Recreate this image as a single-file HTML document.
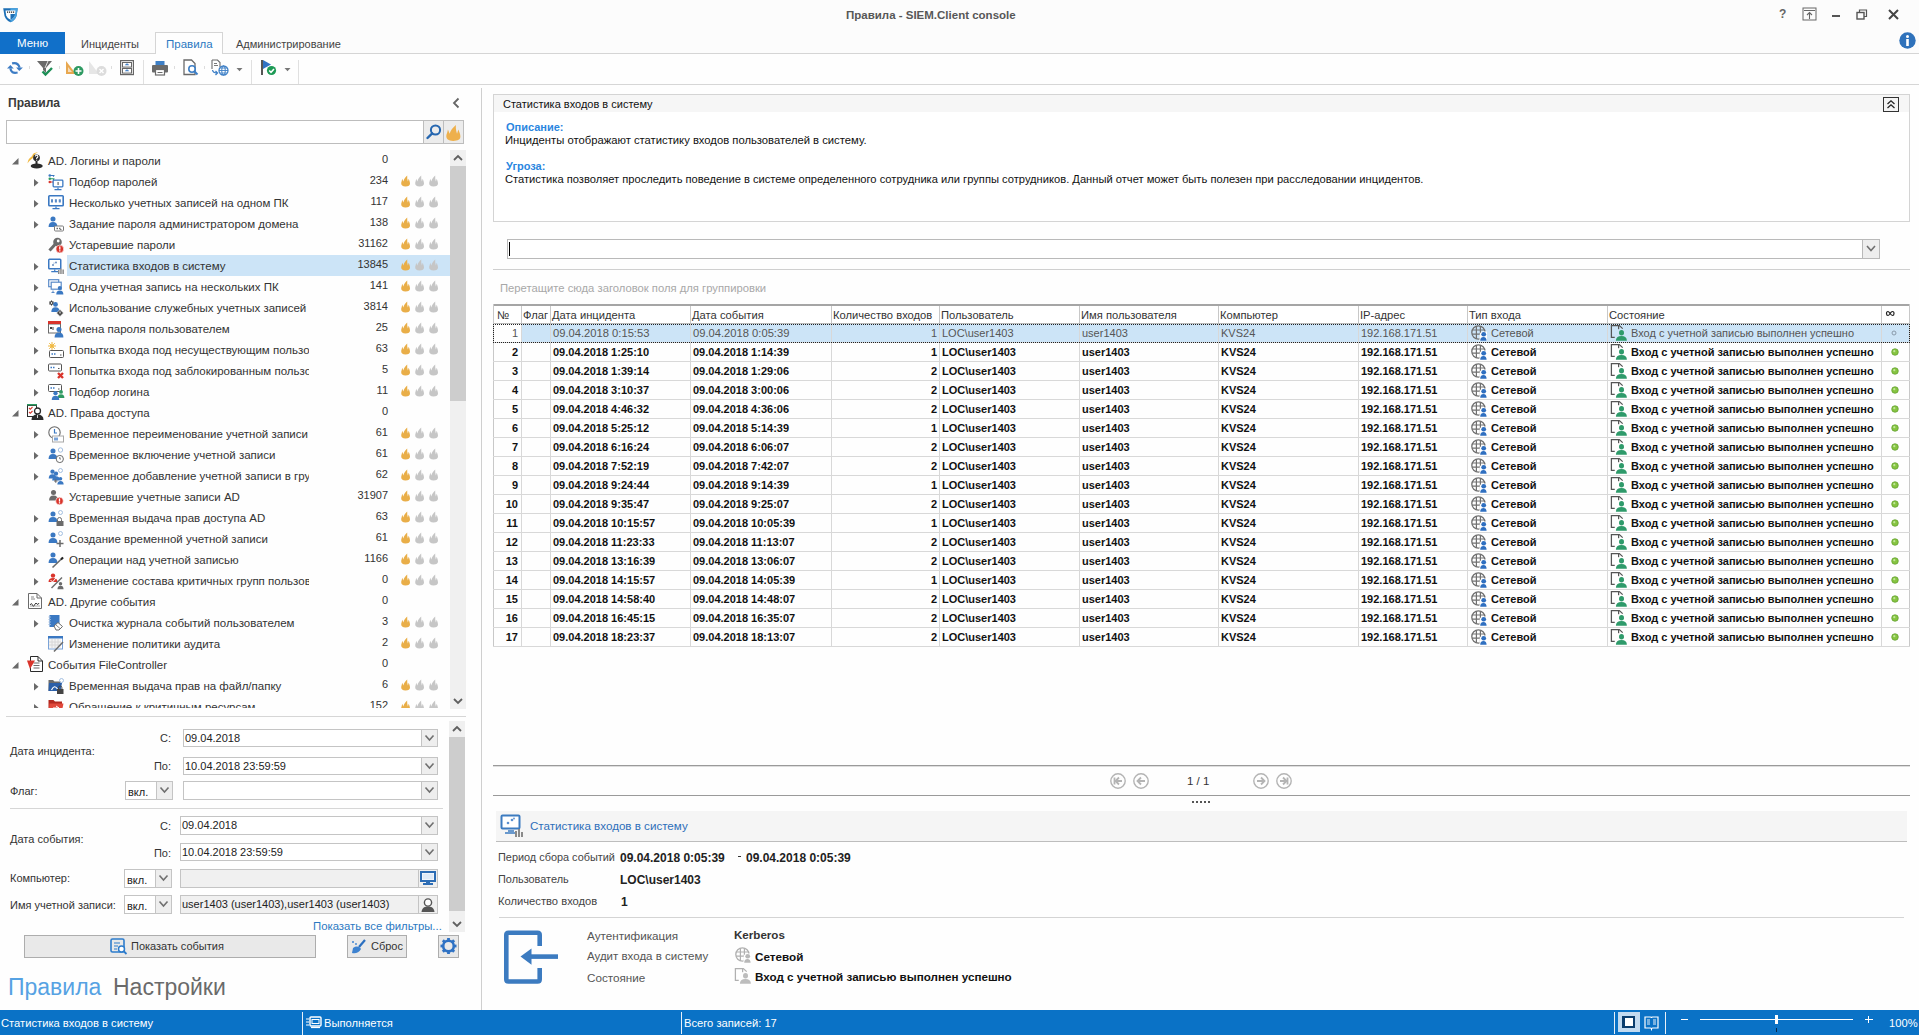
<!DOCTYPE html><html><head><meta charset="utf-8"><style>
html,body{margin:0;padding:0;}
body{width:1919px;height:1035px;position:relative;overflow:hidden;background:#fefefe;font-family:'Liberation Sans', sans-serif;}
div{box-sizing:border-box;}
</style></head><body><div style="position:absolute;left:0px;top:0px;width:1919px;height:32px;background:#fcfcfc"></div><div style="position:absolute;top:10px;font-size:11.5px;line-height:1;white-space:nowrap;color:#575757;font-weight:bold;left:846px;">Правила - SIEM.Client console</div><div style="position:absolute;left:0px;top:32px;width:1919px;height:22px;background:#fcfcfc"></div><div style="position:absolute;left:0px;top:53px;width:1919px;height:1px;background:#d5d5d5"></div><div style="position:absolute;left:0px;top:32px;width:65px;height:22px;background:#1170c9"></div><div style="position:absolute;top:38px;font-size:11.5px;line-height:1;white-space:nowrap;color:#ffffff;font-weight:normal;left:17px;">Меню</div><div style="position:absolute;top:39px;font-size:11px;line-height:1;white-space:nowrap;color:#444;font-weight:normal;left:81px;">Инциденты</div><div style="position:absolute;left:155px;top:32px;width:68px;height:22px;background:#fefefe;border:1px solid #d5d5d5;border-bottom:none"></div><div style="position:absolute;top:39px;font-size:11.5px;line-height:1;white-space:nowrap;color:#2b79c2;font-weight:normal;left:166px;">Правила</div><div style="position:absolute;top:39px;font-size:11px;line-height:1;white-space:nowrap;color:#444;font-weight:normal;left:236px;">Администрирование</div><div style="position:absolute;left:0px;top:54px;width:1919px;height:30px;background:#fefefe"></div><div style="position:absolute;left:0px;top:84px;width:1919px;height:1px;background:#d6d6d6"></div><svg style="position:absolute;left:2px;top:7px;" width="17" height="16" viewBox="0 0 17 16"><path d="M1.2 1.2 H15.8 L14.5 9 Q13 13.5 8.5 15.2 Q4 13.5 2.5 9 Z" fill="#1d6fb5"/><path d="M8.5 1.2 H15.8 L14.5 9 Q13 13.5 8.5 15.2 Z" fill="#4aa3e0"/><path d="M3.5 3.5 H13.5 L12.8 8.5 Q11.8 11.5 8.5 12.8 Q5.2 11.5 4.2 8.5 Z" fill="#fff"/><path d="M8.5 7 H13 L12.8 8.5 Q11.8 11.5 8.5 12.8 Z" fill="#1d6fb5"/><path d="M5 5.2 h1.2 M7 5.2 h1.2 M9 5.2 h1.2 M11 5.2 h1.2" stroke="#222" stroke-width="1.2"/></svg><div style="position:absolute;top:8px;font-size:12px;line-height:1;white-space:nowrap;color:#666;font-weight:bold;left:1779px;">?</div><svg style="position:absolute;left:1802px;top:7px;" width="15" height="14" viewBox="0 0 15 14"><rect x="1" y="1" width="13" height="12" fill="none" stroke="#666" stroke-width="1"/><path d="M2 3.5 H13" stroke="#666" stroke-width="1"/><path d="M7.5 12 V5.5 M5 8 L7.5 5.5 L10 8" stroke="#666" stroke-width="1.1" fill="none"/></svg><div style="position:absolute;left:1832px;top:15px;width:8px;height:2px;background:#555"></div><svg style="position:absolute;left:1856px;top:9px;" width="12" height="11" viewBox="0 0 12 11"><rect x="1" y="3.5" width="7" height="6.5" fill="none" stroke="#555" stroke-width="1.4"/><path d="M3.5 3.5 V1 H10.5 V7.5 H8" stroke="#555" stroke-width="1.2" fill="none"/></svg><svg style="position:absolute;left:1888px;top:9px;" width="11" height="11" viewBox="0 0 11 11"><path d="M1 1 L10 10 M10 1 L1 10" stroke="#444" stroke-width="2"/></svg><svg style="position:absolute;left:1899px;top:32px;" width="17" height="17" viewBox="0 0 17 17"><circle cx="8.5" cy="8.5" r="8.2" fill="#2f72bb"/><circle cx="8.5" cy="4.5" r="1.5" fill="#fff"/><rect x="7.2" y="7" width="2.6" height="7" fill="#fff"/></svg><svg style="position:absolute;left:6px;top:60px;" width="18" height="16" viewBox="0 0 18 16"><path d="M6.1 3.4 Q12 2 13.6 7.6" stroke="#3d7cc4" stroke-width="2.2" fill="none"/><path d="M10.1 7.4 H16.9 L13.3 11 Z" fill="#3d7cc4"/><path d="M11.6 12.5 Q5 14 4.4 8.4" stroke="#3d7cc4" stroke-width="2.2" fill="none"/><path d="M1 8.5 H7.8 L4.4 4.9 Z" fill="#3d7cc4"/></svg><div style="position:absolute;left:29px;top:66px;width:1px;height:3px;background:#ddd"></div><svg style="position:absolute;left:36px;top:60px;" width="18" height="17" viewBox="0 0 18 17"><path d="M1 1 H16 L10 8 V13 L7 10 V8 Z" fill="#6a6a6a"/><path d="M12 1 L9 8" stroke="#fff" stroke-width="0.8"/><path d="M6.5 11.5 L9.5 14.5 L16 8" stroke="#1d8f56" stroke-width="2.4" fill="none"/></svg><div style="position:absolute;left:59px;top:66px;width:1px;height:3px;background:#ddd"></div><svg style="position:absolute;left:65px;top:60px;" width="19" height="17" viewBox="0 0 19 17"><path d="M1 1 L11 14 H1 Z" fill="#e8a850"/><path d="M3 7 V12 H7 Z" fill="#fff" opacity="0.6"/><circle cx="13.5" cy="11" r="5" fill="#2e9a62"/><path d="M13.5 8 V14 M10.5 11 H16.5" stroke="#fff" stroke-width="1.6"/></svg><svg style="position:absolute;left:88px;top:60px;" width="19" height="17" viewBox="0 0 19 17"><path d="M1 1 L11 14 H1 Z" fill="#e6e6e6"/><circle cx="13.5" cy="11" r="5" fill="#dcdcdc"/><path d="M11.5 9 L15.5 13 M15.5 9 L11.5 13" stroke="#fff" stroke-width="1.4"/></svg><div style="position:absolute;left:111px;top:66px;width:1px;height:3px;background:#ddd"></div><svg style="position:absolute;left:119px;top:59px;" width="16" height="17" viewBox="0 0 16 17"><rect x="1.6" y="1.6" width="12.8" height="14" fill="none" stroke="#666" stroke-width="1.2"/><rect x="3.5" y="3.5" width="9" height="4.6" fill="none" stroke="#666" stroke-width="1"/><rect x="3.5" y="9.5" width="9" height="4.6" fill="none" stroke="#666" stroke-width="1"/><path d="M6.5 5.8 Q8 3.8 9.5 5.8 Z M6.5 11.8 Q8 9.8 9.5 11.8 Z" fill="#3d7cc4" stroke="#3d7cc4" stroke-width="0.8"/></svg><div style="position:absolute;left:143px;top:60px;width:1px;height:24px;background:#e0e0e0"></div><svg style="position:absolute;left:151px;top:60px;" width="18" height="16" viewBox="0 0 18 16"><rect x="4.5" y="1" width="9" height="4" fill="#3d7fc6"/><rect x="1" y="5" width="16" height="7.5" rx="1" fill="#6a6a6a"/><rect x="4.5" y="9.5" width="9" height="5.5" fill="#fff" stroke="#6a6a6a" stroke-width="1.2"/><path d="M6.5 12.5 H11.5" stroke="#6a6a6a" stroke-width="1"/></svg><div style="position:absolute;left:174px;top:66px;width:1px;height:3px;background:#ddd"></div><svg style="position:absolute;left:183px;top:59px;" width="17" height="17" viewBox="0 0 17 17"><path d="M1 1 H8.5 L12 4.5 V15.5 H1 Z" fill="#fff" stroke="#6a6a6a" stroke-width="1.3"/><circle cx="9" cy="10" r="3.2" fill="#fff" stroke="#3d7fc6" stroke-width="1.6"/><path d="M11.3 12.3 L14.5 15.5" stroke="#3d7fc6" stroke-width="2"/></svg><div style="position:absolute;left:204px;top:66px;width:1px;height:3px;background:#ddd"></div><svg style="position:absolute;left:211px;top:59px;" width="18" height="17" viewBox="0 0 18 17"><path d="M1 1 H6.5 L9 3.5 V8" fill="none" stroke="#6a6a6a" stroke-width="1.1"/><path d="M1 1 V10" stroke="#6a6a6a" stroke-width="1.1"/><path d="M3 4.5 H6 M3 6.5 H7" stroke="#6a6a6a" stroke-width="0.9"/><path d="M1.5 11 Q2 14 6 14 M4.5 12 L6.5 14 L4.5 16" stroke="#3d7fc6" stroke-width="1.3" fill="none"/><circle cx="12.5" cy="11.5" r="4.5" fill="#fff" stroke="#3d7fc6" stroke-width="1.3"/><ellipse cx="12.5" cy="11.5" rx="1.8" ry="4.5" fill="none" stroke="#3d7fc6" stroke-width="1"/><path d="M8 11.5 H17 M9 9 H16 M9 14 H16" stroke="#3d7fc6" stroke-width="0.9"/></svg><svg style="position:absolute;left:236px;top:68px;" width="7" height="4" viewBox="0 0 7 4"><path d="M0.5 0 H6.5 L3.5 3.2 Z" fill="#777"/></svg><div style="position:absolute;left:251px;top:60px;width:1px;height:24px;background:#e0e0e0"></div><svg style="position:absolute;left:260px;top:59px;" width="18" height="17" viewBox="0 0 18 17"><rect x="1" y="1" width="2" height="15" fill="#555"/><path d="M3 1 L11 5.5 L3 10 Z" fill="#2f72c4"/><circle cx="11.5" cy="11.5" r="4.6" fill="#1d9a55"/><path d="M9.2 11.5 L11 13.3 L14 10" stroke="#fff" stroke-width="1.5" fill="none"/></svg><svg style="position:absolute;left:284px;top:68px;" width="7" height="4" viewBox="0 0 7 4"><path d="M0.5 0 H6.5 L3.5 3.2 Z" fill="#777"/></svg><div style="position:absolute;left:298px;top:60px;width:1px;height:24px;background:#e0e0e0"></div><div style="position:absolute;top:97px;font-size:12.1px;line-height:1;white-space:nowrap;color:#3a3a3a;font-weight:bold;left:8px;">Правила</div><div style="position:absolute;left:481px;top:88px;width:1px;height:922px;background:#cfcfcf"></div><svg style="position:absolute;left:451px;top:97px;" width="10" height="12" viewBox="0 0 10 12"><path d="M7.5 1.5 L3 6 L7.5 10.5" stroke="#666" stroke-width="1.8" fill="none"/></svg><div style="position:absolute;left:6px;top:120px;width:438px;height:24px;background:#fff;border:1px solid #bdbdbd"></div><div style="position:absolute;left:423px;top:120px;width:21px;height:24px;background:#ececec;border:1px solid #bdbdbd"></div><div style="position:absolute;left:443px;top:120px;width:21px;height:24px;background:#ececec;border:1px solid #bdbdbd"></div><svg style="position:absolute;left:425px;top:123px;" width="18" height="18" viewBox="0 0 18 18"><circle cx="10.5" cy="7" r="4.6" stroke="#2667b0" stroke-width="2" fill="none"/><path d="M7.2 10.3 L2.5 15" stroke="#2667b0" stroke-width="2.4" stroke-linecap="round"/></svg><svg style="position:absolute;left:445px;top:123px;" width="18" height="18" viewBox="0 0 18 18"><g transform="translate(1,1.2) scale(1.6,1.45)"><path transform="translate(0,0.5)" d="M4.5 11 C1.5 11 0 9.5 0.2 7.5 C0.3 6.5 0.8 5.5 1.2 3.2 L2.3 6 C2.8 4 4 2 6.2 0 C6 2 6.3 4 6.9 6 L7.7 3.2 C8.4 5 9 6.5 9 8 C9 10 7.5 11 4.5 11 Z" fill="#eeb04c"/></g></svg><div style="position:absolute;left:0;top:150px;width:450px;height:558px;overflow:hidden"><svg style="position:absolute;left:12px;top:8px" width="7" height="7"><path d="M6.5 0 L6.5 6.5 L0 6.5 Z" fill="#6a6a6a"/></svg><svg style="position:absolute;left:27px;top:2px" width="17" height="17" viewBox="0 0 17 17"><path d="M0.5 11.5 Q1 7 3.5 5.5 Q5.5 4 6 2 Q7.5 0 11 0.5 Q8 1 7.2 3.5 Q6.3 6.5 3.5 8 Q1.8 9 0.5 11.5 Z" fill="#f0b840"/><circle cx="9.5" cy="5.8" r="3.4" fill="#2b2b2b"/><path d="M8.3 4.6 Q8.3 3.2 9.6 3.2 Q10.9 3.2 10.9 4.5 Q10.9 5.4 9.7 6.1 V7" stroke="#fff" stroke-width="1.1" fill="none"/><rect x="9.2" y="7.7" width="1" height="1" fill="#fff"/><rect x="8.5" y="9" width="2" height="3" fill="#2b2b2b"/><ellipse cx="9.7" cy="14" rx="6" ry="2.6" fill="#2b2b2b"/></svg><div style="position:absolute;left:48px;top:6px;font-size:11.5px;line-height:1;white-space:nowrap;color:#333">AD. Логины и пароли</div><div style="position:absolute;right:62px;top:4px;font-size:11px;line-height:1;white-space:nowrap;color:#333;text-align:right">0</div><svg style="position:absolute;left:34px;top:29px" width="5" height="8"><path d="M0 0 L4.5 3.75 L0 7.5 Z" fill="#6a6a6a"/></svg><svg style="position:absolute;left:48px;top:24px" width="17" height="17" viewBox="0 0 17 17"><circle cx="1.8" cy="1.5" r="1.3" fill="#3a78c2"/><path d="M3 1.5 H6.5 M5.5 1.5 v1.2" stroke="#3a78c2" stroke-width="1.1"/><circle cx="1.8" cy="4.8" r="1.3" fill="#2e9a62"/><path d="M3 4.8 H6.5 M5.5 4.8 v1.2" stroke="#2e9a62" stroke-width="1.1"/><circle cx="1.8" cy="8" r="1.3" fill="#d9342b"/><path d="M3 8 H6.5 M5.5 8 v1.2" stroke="#d9342b" stroke-width="1.1"/><rect x="5.15" y="6.15" width="9.7" height="6.7" rx="0.8" fill="#fff" stroke="#3a78c2" stroke-width="1.3"/><path d="M10.0 13.5 v1.8 M6.5 15.7 h7" stroke="#3a78c2" stroke-width="1.2"/><rect x="9.5" y="8" width="1.2" height="3" fill="#6b6b6b"/></svg><div style="position:absolute;left:69px;top:27px;width:240px;overflow:hidden;font-size:11.5px;line-height:1;white-space:nowrap;color:#333">Подбор паролей</div><div style="position:absolute;right:62px;top:25px;font-size:11px;line-height:1;white-space:nowrap;color:#333;text-align:right">234</div><svg style="position:absolute;left:401px;top:25px" width="40" height="13"><g transform="translate(0,0)"><path transform="translate(0,0.5)" d="M4.5 11 C1.5 11 0 9.5 0.2 7.5 C0.3 6.5 0.8 5.5 1.2 3.2 L2.3 6 C2.8 4 4 2 6.2 0 C6 2 6.3 4 6.9 6 L7.7 3.2 C8.4 5 9 6.5 9 8 C9 10 7.5 11 4.5 11 Z" fill="#e9ae48"/></g><g transform="translate(14,0)"><path transform="translate(0,0.5)" d="M4.5 11 C1.5 11 0 9.5 0.2 7.5 C0.3 6.5 0.8 5.5 1.2 3.2 L2.3 6 C2.8 4 4 2 6.2 0 C6 2 6.3 4 6.9 6 L7.7 3.2 C8.4 5 9 6.5 9 8 C9 10 7.5 11 4.5 11 Z" fill="#c6c6c6"/></g><g transform="translate(28,0)"><path transform="translate(0,0.5)" d="M4.5 11 C1.5 11 0 9.5 0.2 7.5 C0.3 6.5 0.8 5.5 1.2 3.2 L2.3 6 C2.8 4 4 2 6.2 0 C6 2 6.3 4 6.9 6 L7.7 3.2 C8.4 5 9 6.5 9 8 C9 10 7.5 11 4.5 11 Z" fill="#c6c6c6"/></g></svg><svg style="position:absolute;left:34px;top:50px" width="5" height="8"><path d="M0 0 L4.5 3.75 L0 7.5 Z" fill="#6a6a6a"/></svg><svg style="position:absolute;left:48px;top:45px" width="17" height="17" viewBox="0 0 17 17"><rect x="0.8" y="0.8" width="14.4" height="9.9" rx="0.8" fill="#fff" stroke="#3a78c2" stroke-width="1.6"/><path d="M8.0 11.5 v1.8 M4.5 13.7 h7" stroke="#3a78c2" stroke-width="1.2"/><path d="M4 4.2 v3.4 M7.9 4.2 v3.4 M11.8 4.2 v3.4" stroke="#5a8bc8" stroke-width="2"/><path d="M3 5.9 h2 M6.9 5.9 h2 M10.8 5.9 h2" stroke="#5a8bc8" stroke-width="0.8"/></svg><div style="position:absolute;left:69px;top:48px;width:240px;overflow:hidden;font-size:11.5px;line-height:1;white-space:nowrap;color:#333">Несколько учетных записей на одном ПК</div><div style="position:absolute;right:62px;top:46px;font-size:11px;line-height:1;white-space:nowrap;color:#333;text-align:right">117</div><svg style="position:absolute;left:401px;top:46px" width="40" height="13"><g transform="translate(0,0)"><path transform="translate(0,0.5)" d="M4.5 11 C1.5 11 0 9.5 0.2 7.5 C0.3 6.5 0.8 5.5 1.2 3.2 L2.3 6 C2.8 4 4 2 6.2 0 C6 2 6.3 4 6.9 6 L7.7 3.2 C8.4 5 9 6.5 9 8 C9 10 7.5 11 4.5 11 Z" fill="#e9ae48"/></g><g transform="translate(14,0)"><path transform="translate(0,0.5)" d="M4.5 11 C1.5 11 0 9.5 0.2 7.5 C0.3 6.5 0.8 5.5 1.2 3.2 L2.3 6 C2.8 4 4 2 6.2 0 C6 2 6.3 4 6.9 6 L7.7 3.2 C8.4 5 9 6.5 9 8 C9 10 7.5 11 4.5 11 Z" fill="#c6c6c6"/></g><g transform="translate(28,0)"><path transform="translate(0,0.5)" d="M4.5 11 C1.5 11 0 9.5 0.2 7.5 C0.3 6.5 0.8 5.5 1.2 3.2 L2.3 6 C2.8 4 4 2 6.2 0 C6 2 6.3 4 6.9 6 L7.7 3.2 C8.4 5 9 6.5 9 8 C9 10 7.5 11 4.5 11 Z" fill="#c6c6c6"/></g></svg><svg style="position:absolute;left:34px;top:71px" width="5" height="8"><path d="M0 0 L4.5 3.75 L0 7.5 Z" fill="#6a6a6a"/></svg><svg style="position:absolute;left:48px;top:66px" width="17" height="17" viewBox="0 0 17 17"><circle cx="5" cy="3.02" r="2.52" fill="#3a78c2"/><path d="M0.5899999999999999 11.0 Q0.5899999999999999 6.065 5 6.065 Q9.41 6.065 9.41 11.0 Z" fill="#3a78c2"/><rect x="6.5" y="10.0" width="9" height="5" rx="1" fill="#fff" stroke="#7a7a7a" stroke-width="1"/><path d="M8.5 12.5 h1.5 M11 12.5 h1.5" stroke="#6b6b6b" stroke-width="1.6"/><path d="M12 13.5 h1.5" stroke="#7a7a7a" stroke-width="1"/></svg><div style="position:absolute;left:69px;top:69px;width:240px;overflow:hidden;font-size:11.5px;line-height:1;white-space:nowrap;color:#333">Задание пароля администратором домена</div><div style="position:absolute;right:62px;top:67px;font-size:11px;line-height:1;white-space:nowrap;color:#333;text-align:right">138</div><svg style="position:absolute;left:401px;top:67px" width="40" height="13"><g transform="translate(0,0)"><path transform="translate(0,0.5)" d="M4.5 11 C1.5 11 0 9.5 0.2 7.5 C0.3 6.5 0.8 5.5 1.2 3.2 L2.3 6 C2.8 4 4 2 6.2 0 C6 2 6.3 4 6.9 6 L7.7 3.2 C8.4 5 9 6.5 9 8 C9 10 7.5 11 4.5 11 Z" fill="#e9ae48"/></g><g transform="translate(14,0)"><path transform="translate(0,0.5)" d="M4.5 11 C1.5 11 0 9.5 0.2 7.5 C0.3 6.5 0.8 5.5 1.2 3.2 L2.3 6 C2.8 4 4 2 6.2 0 C6 2 6.3 4 6.9 6 L7.7 3.2 C8.4 5 9 6.5 9 8 C9 10 7.5 11 4.5 11 Z" fill="#c6c6c6"/></g><g transform="translate(28,0)"><path transform="translate(0,0.5)" d="M4.5 11 C1.5 11 0 9.5 0.2 7.5 C0.3 6.5 0.8 5.5 1.2 3.2 L2.3 6 C2.8 4 4 2 6.2 0 C6 2 6.3 4 6.9 6 L7.7 3.2 C8.4 5 9 6.5 9 8 C9 10 7.5 11 4.5 11 Z" fill="#c6c6c6"/></g></svg><svg style="position:absolute;left:48px;top:87px" width="17" height="17" viewBox="0 0 17 17"><circle cx="9.5" cy="5" r="4.3" fill="#6b6b6b"/><circle cx="10.2" cy="4" r="1.4" fill="#fff"/><path d="M7 7.5 L1.5 13.5" stroke="#6b6b6b" stroke-width="3"/><circle cx="11.8" cy="12" r="3.9" fill="#d9342b" stroke="#fff" stroke-width="0.6"/><rect x="11.15" y="9.4" width="1.3" height="3.2" fill="#fff"/><rect x="11.15" y="13.2" width="1.3" height="1.3" fill="#fff"/></svg><div style="position:absolute;left:69px;top:90px;width:240px;overflow:hidden;font-size:11.5px;line-height:1;white-space:nowrap;color:#333">Устаревшие пароли</div><div style="position:absolute;right:62px;top:88px;font-size:11px;line-height:1;white-space:nowrap;color:#333;text-align:right">31162</div><svg style="position:absolute;left:401px;top:88px" width="40" height="13"><g transform="translate(0,0)"><path transform="translate(0,0.5)" d="M4.5 11 C1.5 11 0 9.5 0.2 7.5 C0.3 6.5 0.8 5.5 1.2 3.2 L2.3 6 C2.8 4 4 2 6.2 0 C6 2 6.3 4 6.9 6 L7.7 3.2 C8.4 5 9 6.5 9 8 C9 10 7.5 11 4.5 11 Z" fill="#e9ae48"/></g><g transform="translate(14,0)"><path transform="translate(0,0.5)" d="M4.5 11 C1.5 11 0 9.5 0.2 7.5 C0.3 6.5 0.8 5.5 1.2 3.2 L2.3 6 C2.8 4 4 2 6.2 0 C6 2 6.3 4 6.9 6 L7.7 3.2 C8.4 5 9 6.5 9 8 C9 10 7.5 11 4.5 11 Z" fill="#c6c6c6"/></g><g transform="translate(28,0)"><path transform="translate(0,0.5)" d="M4.5 11 C1.5 11 0 9.5 0.2 7.5 C0.3 6.5 0.8 5.5 1.2 3.2 L2.3 6 C2.8 4 4 2 6.2 0 C6 2 6.3 4 6.9 6 L7.7 3.2 C8.4 5 9 6.5 9 8 C9 10 7.5 11 4.5 11 Z" fill="#c6c6c6"/></g></svg><div style="position:absolute;left:67px;top:105px;width:383px;height:21px;background:#cce4f7"></div><svg style="position:absolute;left:34px;top:113px" width="5" height="8"><path d="M0 0 L4.5 3.75 L0 7.5 Z" fill="#6a6a6a"/></svg><svg style="position:absolute;left:48px;top:108px" width="17" height="17" viewBox="0 0 17 17"><rect x="0.75" y="1.25" width="12.0" height="9.5" rx="0.8" fill="#fff" stroke="#3a78c2" stroke-width="1.5"/><path d="M6.75 11.5 v1.8 M3.25 13.7 h7" stroke="#3a78c2" stroke-width="1.2"/><circle cx="5" cy="7" r="1" fill="#6a8fc0"/><circle cx="8" cy="4.5" r="1" fill="#6a8fc0"/><circle cx="6" cy="5" r="0.6" fill="#6a8fc0"/><rect x="10" y="12" width="1.5" height="4" fill="#8a8a8a"/><rect x="12.2" y="10.5" width="1.5" height="5.5" fill="#8a8a8a"/><rect x="14.4" y="11.5" width="1.5" height="4.5" fill="#8a8a8a"/></svg><div style="position:absolute;left:69px;top:111px;width:240px;overflow:hidden;font-size:11.5px;line-height:1;white-space:nowrap;color:#333">Статистика входов в систему</div><div style="position:absolute;right:62px;top:109px;font-size:11px;line-height:1;white-space:nowrap;color:#333;text-align:right">13845</div><svg style="position:absolute;left:401px;top:109px" width="40" height="13"><g transform="translate(0,0)"><path transform="translate(0,0.5)" d="M4.5 11 C1.5 11 0 9.5 0.2 7.5 C0.3 6.5 0.8 5.5 1.2 3.2 L2.3 6 C2.8 4 4 2 6.2 0 C6 2 6.3 4 6.9 6 L7.7 3.2 C8.4 5 9 6.5 9 8 C9 10 7.5 11 4.5 11 Z" fill="#e9ae48"/></g><g transform="translate(14,0)"><path transform="translate(0,0.5)" d="M4.5 11 C1.5 11 0 9.5 0.2 7.5 C0.3 6.5 0.8 5.5 1.2 3.2 L2.3 6 C2.8 4 4 2 6.2 0 C6 2 6.3 4 6.9 6 L7.7 3.2 C8.4 5 9 6.5 9 8 C9 10 7.5 11 4.5 11 Z" fill="#c6c6c6"/></g><g transform="translate(28,0)"><path transform="translate(0,0.5)" d="M4.5 11 C1.5 11 0 9.5 0.2 7.5 C0.3 6.5 0.8 5.5 1.2 3.2 L2.3 6 C2.8 4 4 2 6.2 0 C6 2 6.3 4 6.9 6 L7.7 3.2 C8.4 5 9 6.5 9 8 C9 10 7.5 11 4.5 11 Z" fill="#c6c6c6"/></g></svg><svg style="position:absolute;left:34px;top:134px" width="5" height="8"><path d="M0 0 L4.5 3.75 L0 7.5 Z" fill="#6a6a6a"/></svg><svg style="position:absolute;left:48px;top:129px" width="17" height="17" viewBox="0 0 17 17"><rect x="0.7" y="0.7" width="10" height="7" fill="#fff" stroke="#5a8bc8" stroke-width="1.2"/><rect x="3.2" y="3.2" width="10" height="7" fill="#fff" stroke="#5a8bc8" stroke-width="1.2"/><path d="M5 11.5 v1.5 M3.5 13.5 h3" stroke="#5a8bc8" stroke-width="1"/><circle cx="11.8" cy="9.04" r="2.04" fill="#3a78c2"/><path d="M8.23 15.5 Q8.23 11.504999999999999 11.8 11.504999999999999 Q15.370000000000001 11.504999999999999 15.370000000000001 15.5 Z" fill="#3a78c2"/></svg><div style="position:absolute;left:69px;top:132px;width:240px;overflow:hidden;font-size:11.5px;line-height:1;white-space:nowrap;color:#333">Одна учетная запись на нескольких ПК</div><div style="position:absolute;right:62px;top:130px;font-size:11px;line-height:1;white-space:nowrap;color:#333;text-align:right">141</div><svg style="position:absolute;left:401px;top:130px" width="40" height="13"><g transform="translate(0,0)"><path transform="translate(0,0.5)" d="M4.5 11 C1.5 11 0 9.5 0.2 7.5 C0.3 6.5 0.8 5.5 1.2 3.2 L2.3 6 C2.8 4 4 2 6.2 0 C6 2 6.3 4 6.9 6 L7.7 3.2 C8.4 5 9 6.5 9 8 C9 10 7.5 11 4.5 11 Z" fill="#e9ae48"/></g><g transform="translate(14,0)"><path transform="translate(0,0.5)" d="M4.5 11 C1.5 11 0 9.5 0.2 7.5 C0.3 6.5 0.8 5.5 1.2 3.2 L2.3 6 C2.8 4 4 2 6.2 0 C6 2 6.3 4 6.9 6 L7.7 3.2 C8.4 5 9 6.5 9 8 C9 10 7.5 11 4.5 11 Z" fill="#c6c6c6"/></g><g transform="translate(28,0)"><path transform="translate(0,0.5)" d="M4.5 11 C1.5 11 0 9.5 0.2 7.5 C0.3 6.5 0.8 5.5 1.2 3.2 L2.3 6 C2.8 4 4 2 6.2 0 C6 2 6.3 4 6.9 6 L7.7 3.2 C8.4 5 9 6.5 9 8 C9 10 7.5 11 4.5 11 Z" fill="#c6c6c6"/></g></svg><svg style="position:absolute;left:34px;top:155px" width="5" height="8"><path d="M0 0 L4.5 3.75 L0 7.5 Z" fill="#6a6a6a"/></svg><svg style="position:absolute;left:48px;top:150px" width="17" height="17" viewBox="0 0 17 17"><path d="M1 3 L6 3 M3.5 0.5 L3.5 5.5 M1.8 1.2 L5.2 4.8 M5.2 1.2 L1.8 4.8" stroke="#2b2b2b" stroke-width="1"/><circle cx="3.5" cy="3" r="1.3" fill="#fff" stroke="#2b2b2b" stroke-width="0.8"/><circle cx="7.5" cy="4.4" r="2.4" fill="#3a78c2"/><path d="M3.3 12.0 Q3.3 7.3 7.5 7.3 Q11.7 7.3 11.7 12.0 Z" fill="#3a78c2"/><path d="M12 9.5 L15.5 13 L12 16.5 L8.5 13 Z" fill="#444" stroke="#fff" stroke-width="0.6"/><rect x="11.5" y="11.5" width="1" height="2" fill="#fff"/></svg><div style="position:absolute;left:69px;top:153px;width:240px;overflow:hidden;font-size:11.5px;line-height:1;white-space:nowrap;color:#333">Использование служебных учетных записей (</div><div style="position:absolute;right:62px;top:151px;font-size:11px;line-height:1;white-space:nowrap;color:#333;text-align:right">3814</div><svg style="position:absolute;left:401px;top:151px" width="40" height="13"><g transform="translate(0,0)"><path transform="translate(0,0.5)" d="M4.5 11 C1.5 11 0 9.5 0.2 7.5 C0.3 6.5 0.8 5.5 1.2 3.2 L2.3 6 C2.8 4 4 2 6.2 0 C6 2 6.3 4 6.9 6 L7.7 3.2 C8.4 5 9 6.5 9 8 C9 10 7.5 11 4.5 11 Z" fill="#e9ae48"/></g><g transform="translate(14,0)"><path transform="translate(0,0.5)" d="M4.5 11 C1.5 11 0 9.5 0.2 7.5 C0.3 6.5 0.8 5.5 1.2 3.2 L2.3 6 C2.8 4 4 2 6.2 0 C6 2 6.3 4 6.9 6 L7.7 3.2 C8.4 5 9 6.5 9 8 C9 10 7.5 11 4.5 11 Z" fill="#c6c6c6"/></g><g transform="translate(28,0)"><path transform="translate(0,0.5)" d="M4.5 11 C1.5 11 0 9.5 0.2 7.5 C0.3 6.5 0.8 5.5 1.2 3.2 L2.3 6 C2.8 4 4 2 6.2 0 C6 2 6.3 4 6.9 6 L7.7 3.2 C8.4 5 9 6.5 9 8 C9 10 7.5 11 4.5 11 Z" fill="#c6c6c6"/></g></svg><svg style="position:absolute;left:34px;top:176px" width="5" height="8"><path d="M0 0 L4.5 3.75 L0 7.5 Z" fill="#6a6a6a"/></svg><svg style="position:absolute;left:48px;top:171px" width="17" height="17" viewBox="0 0 17 17"><rect x="0.5" y="3" width="12" height="9" fill="#fff" stroke="#6b6b6b" stroke-width="1"/><rect x="0" y="0" width="13" height="3" fill="#d9342b"/><path d="M2 6 l2 2 M4 6 l-2 2 M5 6 v3" stroke="#2b2b2b" stroke-width="0.9"/><circle cx="11" cy="8.52" r="2.52" fill="#3a78c2"/><path d="M6.59 16.5 Q6.59 11.565000000000001 11 11.565000000000001 Q15.41 11.565000000000001 15.41 16.5 Z" fill="#3a78c2"/></svg><div style="position:absolute;left:69px;top:174px;width:240px;overflow:hidden;font-size:11.5px;line-height:1;white-space:nowrap;color:#333">Смена пароля пользователем</div><div style="position:absolute;right:62px;top:172px;font-size:11px;line-height:1;white-space:nowrap;color:#333;text-align:right">25</div><svg style="position:absolute;left:401px;top:172px" width="40" height="13"><g transform="translate(0,0)"><path transform="translate(0,0.5)" d="M4.5 11 C1.5 11 0 9.5 0.2 7.5 C0.3 6.5 0.8 5.5 1.2 3.2 L2.3 6 C2.8 4 4 2 6.2 0 C6 2 6.3 4 6.9 6 L7.7 3.2 C8.4 5 9 6.5 9 8 C9 10 7.5 11 4.5 11 Z" fill="#e9ae48"/></g><g transform="translate(14,0)"><path transform="translate(0,0.5)" d="M4.5 11 C1.5 11 0 9.5 0.2 7.5 C0.3 6.5 0.8 5.5 1.2 3.2 L2.3 6 C2.8 4 4 2 6.2 0 C6 2 6.3 4 6.9 6 L7.7 3.2 C8.4 5 9 6.5 9 8 C9 10 7.5 11 4.5 11 Z" fill="#c6c6c6"/></g><g transform="translate(28,0)"><path transform="translate(0,0.5)" d="M4.5 11 C1.5 11 0 9.5 0.2 7.5 C0.3 6.5 0.8 5.5 1.2 3.2 L2.3 6 C2.8 4 4 2 6.2 0 C6 2 6.3 4 6.9 6 L7.7 3.2 C8.4 5 9 6.5 9 8 C9 10 7.5 11 4.5 11 Z" fill="#c6c6c6"/></g></svg><svg style="position:absolute;left:34px;top:197px" width="5" height="8"><path d="M0 0 L4.5 3.75 L0 7.5 Z" fill="#6a6a6a"/></svg><svg style="position:absolute;left:48px;top:192px" width="17" height="17" viewBox="0 0 17 17"><path d="M4 0 V8 M0 4 H8 M1.2 1.2 L6.8 6.8 M6.8 1.2 L1.2 6.8" stroke="#f0b840" stroke-width="1"/><circle cx="4" cy="4" r="1.8" fill="#f0b840"/><rect x="1.5" y="8.5" width="14" height="7" rx="1" fill="#fff" stroke="#555" stroke-width="1"/><path d="M3.5 12.0 h1.5 M6 12.0 h1.5" stroke="#3a78c2" stroke-width="1.6"/><path d="M12 13.0 h1.5" stroke="#555" stroke-width="1"/></svg><div style="position:absolute;left:69px;top:195px;width:240px;overflow:hidden;font-size:11.5px;line-height:1;white-space:nowrap;color:#333">Попытка входа под несуществующим пользователем</div><div style="position:absolute;right:62px;top:193px;font-size:11px;line-height:1;white-space:nowrap;color:#333;text-align:right">63</div><svg style="position:absolute;left:401px;top:193px" width="40" height="13"><g transform="translate(0,0)"><path transform="translate(0,0.5)" d="M4.5 11 C1.5 11 0 9.5 0.2 7.5 C0.3 6.5 0.8 5.5 1.2 3.2 L2.3 6 C2.8 4 4 2 6.2 0 C6 2 6.3 4 6.9 6 L7.7 3.2 C8.4 5 9 6.5 9 8 C9 10 7.5 11 4.5 11 Z" fill="#e9ae48"/></g><g transform="translate(14,0)"><path transform="translate(0,0.5)" d="M4.5 11 C1.5 11 0 9.5 0.2 7.5 C0.3 6.5 0.8 5.5 1.2 3.2 L2.3 6 C2.8 4 4 2 6.2 0 C6 2 6.3 4 6.9 6 L7.7 3.2 C8.4 5 9 6.5 9 8 C9 10 7.5 11 4.5 11 Z" fill="#c6c6c6"/></g><g transform="translate(28,0)"><path transform="translate(0,0.5)" d="M4.5 11 C1.5 11 0 9.5 0.2 7.5 C0.3 6.5 0.8 5.5 1.2 3.2 L2.3 6 C2.8 4 4 2 6.2 0 C6 2 6.3 4 6.9 6 L7.7 3.2 C8.4 5 9 6.5 9 8 C9 10 7.5 11 4.5 11 Z" fill="#c6c6c6"/></g></svg><svg style="position:absolute;left:34px;top:218px" width="5" height="8"><path d="M0 0 L4.5 3.75 L0 7.5 Z" fill="#6a6a6a"/></svg><svg style="position:absolute;left:48px;top:213px" width="17" height="17" viewBox="0 0 17 17"><rect x="0.5" y="1.0" width="13" height="7" rx="1" fill="#fff" stroke="#555" stroke-width="1"/><path d="M2.5 4.5 h1.5 M5 4.5 h1.5" stroke="#3a78c2" stroke-width="1.6"/><path d="M10 5.5 h1.5" stroke="#555" stroke-width="1"/><path d="M10 10 L15 15 M15 10 L10 15" stroke="#d9342b" stroke-width="2.4"/></svg><div style="position:absolute;left:69px;top:216px;width:240px;overflow:hidden;font-size:11.5px;line-height:1;white-space:nowrap;color:#333">Попытка входа под заблокированным пользователем</div><div style="position:absolute;right:62px;top:214px;font-size:11px;line-height:1;white-space:nowrap;color:#333;text-align:right">5</div><svg style="position:absolute;left:401px;top:214px" width="40" height="13"><g transform="translate(0,0)"><path transform="translate(0,0.5)" d="M4.5 11 C1.5 11 0 9.5 0.2 7.5 C0.3 6.5 0.8 5.5 1.2 3.2 L2.3 6 C2.8 4 4 2 6.2 0 C6 2 6.3 4 6.9 6 L7.7 3.2 C8.4 5 9 6.5 9 8 C9 10 7.5 11 4.5 11 Z" fill="#e9ae48"/></g><g transform="translate(14,0)"><path transform="translate(0,0.5)" d="M4.5 11 C1.5 11 0 9.5 0.2 7.5 C0.3 6.5 0.8 5.5 1.2 3.2 L2.3 6 C2.8 4 4 2 6.2 0 C6 2 6.3 4 6.9 6 L7.7 3.2 C8.4 5 9 6.5 9 8 C9 10 7.5 11 4.5 11 Z" fill="#c6c6c6"/></g><g transform="translate(28,0)"><path transform="translate(0,0.5)" d="M4.5 11 C1.5 11 0 9.5 0.2 7.5 C0.3 6.5 0.8 5.5 1.2 3.2 L2.3 6 C2.8 4 4 2 6.2 0 C6 2 6.3 4 6.9 6 L7.7 3.2 C8.4 5 9 6.5 9 8 C9 10 7.5 11 4.5 11 Z" fill="#c6c6c6"/></g></svg><svg style="position:absolute;left:34px;top:239px" width="5" height="8"><path d="M0 0 L4.5 3.75 L0 7.5 Z" fill="#6a6a6a"/></svg><svg style="position:absolute;left:48px;top:234px" width="17" height="17" viewBox="0 0 17 17"><rect x="0.5" y="0.5" width="13" height="7" rx="1" fill="#fff" stroke="#555" stroke-width="1"/><path d="M2.5 4.0 h1.5 M5 4.0 h1.5" stroke="#3a78c2" stroke-width="1.6"/><path d="M10 5.0 h1.5" stroke="#555" stroke-width="1"/><circle cx="13" cy="7.92" r="1.92" fill="#2e9a62"/><path d="M9.64 14.0 Q9.64 10.24 13 10.24 Q16.36 10.24 16.36 14.0 Z" fill="#2e9a62"/><circle cx="7.5" cy="9.16" r="2.16" fill="#3a78c2"/><path d="M3.7199999999999998 16.0 Q3.7199999999999998 11.77 7.5 11.77 Q11.280000000000001 11.77 11.280000000000001 16.0 Z" fill="#3a78c2"/></svg><div style="position:absolute;left:69px;top:237px;width:240px;overflow:hidden;font-size:11.5px;line-height:1;white-space:nowrap;color:#333">Подбор логина</div><div style="position:absolute;right:62px;top:235px;font-size:11px;line-height:1;white-space:nowrap;color:#333;text-align:right">11</div><svg style="position:absolute;left:401px;top:235px" width="40" height="13"><g transform="translate(0,0)"><path transform="translate(0,0.5)" d="M4.5 11 C1.5 11 0 9.5 0.2 7.5 C0.3 6.5 0.8 5.5 1.2 3.2 L2.3 6 C2.8 4 4 2 6.2 0 C6 2 6.3 4 6.9 6 L7.7 3.2 C8.4 5 9 6.5 9 8 C9 10 7.5 11 4.5 11 Z" fill="#e9ae48"/></g><g transform="translate(14,0)"><path transform="translate(0,0.5)" d="M4.5 11 C1.5 11 0 9.5 0.2 7.5 C0.3 6.5 0.8 5.5 1.2 3.2 L2.3 6 C2.8 4 4 2 6.2 0 C6 2 6.3 4 6.9 6 L7.7 3.2 C8.4 5 9 6.5 9 8 C9 10 7.5 11 4.5 11 Z" fill="#c6c6c6"/></g><g transform="translate(28,0)"><path transform="translate(0,0.5)" d="M4.5 11 C1.5 11 0 9.5 0.2 7.5 C0.3 6.5 0.8 5.5 1.2 3.2 L2.3 6 C2.8 4 4 2 6.2 0 C6 2 6.3 4 6.9 6 L7.7 3.2 C8.4 5 9 6.5 9 8 C9 10 7.5 11 4.5 11 Z" fill="#c6c6c6"/></g></svg><svg style="position:absolute;left:12px;top:260px" width="7" height="7"><path d="M6.5 0 L6.5 6.5 L0 6.5 Z" fill="#6a6a6a"/></svg><svg style="position:absolute;left:27px;top:254px" width="17" height="17" viewBox="0 0 17 17"><rect x="0.5" y="1.5" width="9" height="11" fill="#fff" stroke="#2b2b2b" stroke-width="1"/><rect x="0" y="0" width="10" height="1.5" fill="#2e9a62"/><path d="M2 4 l1.3 1.3 L5.5 3 M2 8 l1.3 1.3 L5.5 7" stroke="#d9342b" stroke-width="1.1" fill="none"/><circle cx="10.5" cy="7" r="3" fill="#fff" stroke="#2b2b2b" stroke-width="1.3"/><path d="M4.5 16 Q4.5 10.5 10.5 10.5 Q16.5 10.5 16.5 16 Z" fill="#2b2b2b"/><path d="M10.5 11 v3" stroke="#fff" stroke-width="0.8"/></svg><div style="position:absolute;left:48px;top:258px;font-size:11.5px;line-height:1;white-space:nowrap;color:#333">AD. Права доступа</div><div style="position:absolute;right:62px;top:256px;font-size:11px;line-height:1;white-space:nowrap;color:#333;text-align:right">0</div><svg style="position:absolute;left:34px;top:281px" width="5" height="8"><path d="M0 0 L4.5 3.75 L0 7.5 Z" fill="#6a6a6a"/></svg><svg style="position:absolute;left:48px;top:276px" width="17" height="17" viewBox="0 0 17 17"><circle cx="6.5" cy="6.5" r="5.7" fill="#fff" stroke="#6b6b6b" stroke-width="1.1"/><path d="M6.5 3 V7 H9" stroke="#3a78c2" stroke-width="1.2" fill="none"/><rect x="4.5" y="10" width="11" height="6" fill="#fff" stroke="#a8a8a8" stroke-width="1"/><rect x="6" y="11.5" width="4" height="3" fill="#7aa3d8"/></svg><div style="position:absolute;left:69px;top:279px;width:240px;overflow:hidden;font-size:11.5px;line-height:1;white-space:nowrap;color:#333">Временное переименование учетной записи</div><div style="position:absolute;right:62px;top:277px;font-size:11px;line-height:1;white-space:nowrap;color:#333;text-align:right">61</div><svg style="position:absolute;left:401px;top:277px" width="40" height="13"><g transform="translate(0,0)"><path transform="translate(0,0.5)" d="M4.5 11 C1.5 11 0 9.5 0.2 7.5 C0.3 6.5 0.8 5.5 1.2 3.2 L2.3 6 C2.8 4 4 2 6.2 0 C6 2 6.3 4 6.9 6 L7.7 3.2 C8.4 5 9 6.5 9 8 C9 10 7.5 11 4.5 11 Z" fill="#e9ae48"/></g><g transform="translate(14,0)"><path transform="translate(0,0.5)" d="M4.5 11 C1.5 11 0 9.5 0.2 7.5 C0.3 6.5 0.8 5.5 1.2 3.2 L2.3 6 C2.8 4 4 2 6.2 0 C6 2 6.3 4 6.9 6 L7.7 3.2 C8.4 5 9 6.5 9 8 C9 10 7.5 11 4.5 11 Z" fill="#c6c6c6"/></g><g transform="translate(28,0)"><path transform="translate(0,0.5)" d="M4.5 11 C1.5 11 0 9.5 0.2 7.5 C0.3 6.5 0.8 5.5 1.2 3.2 L2.3 6 C2.8 4 4 2 6.2 0 C6 2 6.3 4 6.9 6 L7.7 3.2 C8.4 5 9 6.5 9 8 C9 10 7.5 11 4.5 11 Z" fill="#c6c6c6"/></g></svg><svg style="position:absolute;left:34px;top:302px" width="5" height="8"><path d="M0 0 L4.5 3.75 L0 7.5 Z" fill="#6a6a6a"/></svg><svg style="position:absolute;left:48px;top:297px" width="17" height="17" viewBox="0 0 17 17"><circle cx="5" cy="4.02" r="2.52" fill="#3a78c2"/><path d="M0.5899999999999999 12.0 Q0.5899999999999999 7.065 5 7.065 Q9.41 7.065 9.41 12.0 Z" fill="#3a78c2"/><circle cx="12.5" cy="3" r="2.2" fill="none" stroke="#9ab8dc" stroke-width="0.9"/><circle cx="11.8" cy="12" r="3.6" fill="#fff" stroke="#6b6b6b" stroke-width="1"/><path d="M11.8 10 V12 H13" stroke="#6b6b6b" stroke-width="0.9" fill="none"/></svg><div style="position:absolute;left:69px;top:300px;width:240px;overflow:hidden;font-size:11.5px;line-height:1;white-space:nowrap;color:#333">Временное включение учетной записи</div><div style="position:absolute;right:62px;top:298px;font-size:11px;line-height:1;white-space:nowrap;color:#333;text-align:right">61</div><svg style="position:absolute;left:401px;top:298px" width="40" height="13"><g transform="translate(0,0)"><path transform="translate(0,0.5)" d="M4.5 11 C1.5 11 0 9.5 0.2 7.5 C0.3 6.5 0.8 5.5 1.2 3.2 L2.3 6 C2.8 4 4 2 6.2 0 C6 2 6.3 4 6.9 6 L7.7 3.2 C8.4 5 9 6.5 9 8 C9 10 7.5 11 4.5 11 Z" fill="#e9ae48"/></g><g transform="translate(14,0)"><path transform="translate(0,0.5)" d="M4.5 11 C1.5 11 0 9.5 0.2 7.5 C0.3 6.5 0.8 5.5 1.2 3.2 L2.3 6 C2.8 4 4 2 6.2 0 C6 2 6.3 4 6.9 6 L7.7 3.2 C8.4 5 9 6.5 9 8 C9 10 7.5 11 4.5 11 Z" fill="#c6c6c6"/></g><g transform="translate(28,0)"><path transform="translate(0,0.5)" d="M4.5 11 C1.5 11 0 9.5 0.2 7.5 C0.3 6.5 0.8 5.5 1.2 3.2 L2.3 6 C2.8 4 4 2 6.2 0 C6 2 6.3 4 6.9 6 L7.7 3.2 C8.4 5 9 6.5 9 8 C9 10 7.5 11 4.5 11 Z" fill="#c6c6c6"/></g></svg><svg style="position:absolute;left:34px;top:323px" width="5" height="8"><path d="M0 0 L4.5 3.75 L0 7.5 Z" fill="#6a6a6a"/></svg><svg style="position:absolute;left:48px;top:318px" width="17" height="17" viewBox="0 0 17 17"><circle cx="4.5" cy="3.66" r="2.16" fill="#3a78c2"/><path d="M0.7199999999999998 10.5 Q0.7199999999999998 6.27 4.5 6.27 Q8.280000000000001 6.27 8.280000000000001 10.5 Z" fill="#3a78c2"/><circle cx="8" cy="5.66" r="2.16" fill="#3a78c2"/><path d="M4.22 12.5 Q4.22 8.27 8 8.27 Q11.780000000000001 8.27 11.780000000000001 12.5 Z" fill="#3a78c2"/><circle cx="12.5" cy="2.5" r="2" fill="none" stroke="#9ab8dc" stroke-width="0.9"/><path d="M6 13 h3.5 M7.75 11.25 v3.5" stroke="#6b6b6b" stroke-width="1.1"/><circle cx="12.5" cy="10.8" r="1.7999999999999998" fill="#3a78c2"/><path d="M9.35 16.5 Q9.35 12.975 12.5 12.975 Q15.65 12.975 15.65 16.5 Z" fill="#3a78c2"/></svg><div style="position:absolute;left:69px;top:321px;width:240px;overflow:hidden;font-size:11.5px;line-height:1;white-space:nowrap;color:#333">Временное добавление учетной записи в группу</div><div style="position:absolute;right:62px;top:319px;font-size:11px;line-height:1;white-space:nowrap;color:#333;text-align:right">62</div><svg style="position:absolute;left:401px;top:319px" width="40" height="13"><g transform="translate(0,0)"><path transform="translate(0,0.5)" d="M4.5 11 C1.5 11 0 9.5 0.2 7.5 C0.3 6.5 0.8 5.5 1.2 3.2 L2.3 6 C2.8 4 4 2 6.2 0 C6 2 6.3 4 6.9 6 L7.7 3.2 C8.4 5 9 6.5 9 8 C9 10 7.5 11 4.5 11 Z" fill="#e9ae48"/></g><g transform="translate(14,0)"><path transform="translate(0,0.5)" d="M4.5 11 C1.5 11 0 9.5 0.2 7.5 C0.3 6.5 0.8 5.5 1.2 3.2 L2.3 6 C2.8 4 4 2 6.2 0 C6 2 6.3 4 6.9 6 L7.7 3.2 C8.4 5 9 6.5 9 8 C9 10 7.5 11 4.5 11 Z" fill="#c6c6c6"/></g><g transform="translate(28,0)"><path transform="translate(0,0.5)" d="M4.5 11 C1.5 11 0 9.5 0.2 7.5 C0.3 6.5 0.8 5.5 1.2 3.2 L2.3 6 C2.8 4 4 2 6.2 0 C6 2 6.3 4 6.9 6 L7.7 3.2 C8.4 5 9 6.5 9 8 C9 10 7.5 11 4.5 11 Z" fill="#c6c6c6"/></g></svg><svg style="position:absolute;left:48px;top:339px" width="17" height="17" viewBox="0 0 17 17"><circle cx="5.5" cy="3.52" r="2.52" fill="#6b6b6b"/><path d="M1.0899999999999999 11.5 Q1.0899999999999999 6.565 5.5 6.565 Q9.91 6.565 9.91 11.5 Z" fill="#6b6b6b"/><circle cx="11.5" cy="12" r="3.8" fill="#d9342b" stroke="#fff" stroke-width="0.6"/><rect x="10.85" y="9.4" width="1.3" height="3.2" fill="#fff"/><rect x="10.85" y="13.2" width="1.3" height="1.3" fill="#fff"/></svg><div style="position:absolute;left:69px;top:342px;width:240px;overflow:hidden;font-size:11.5px;line-height:1;white-space:nowrap;color:#333">Устаревшие учетные записи AD</div><div style="position:absolute;right:62px;top:340px;font-size:11px;line-height:1;white-space:nowrap;color:#333;text-align:right">31907</div><svg style="position:absolute;left:401px;top:340px" width="40" height="13"><g transform="translate(0,0)"><path transform="translate(0,0.5)" d="M4.5 11 C1.5 11 0 9.5 0.2 7.5 C0.3 6.5 0.8 5.5 1.2 3.2 L2.3 6 C2.8 4 4 2 6.2 0 C6 2 6.3 4 6.9 6 L7.7 3.2 C8.4 5 9 6.5 9 8 C9 10 7.5 11 4.5 11 Z" fill="#e9ae48"/></g><g transform="translate(14,0)"><path transform="translate(0,0.5)" d="M4.5 11 C1.5 11 0 9.5 0.2 7.5 C0.3 6.5 0.8 5.5 1.2 3.2 L2.3 6 C2.8 4 4 2 6.2 0 C6 2 6.3 4 6.9 6 L7.7 3.2 C8.4 5 9 6.5 9 8 C9 10 7.5 11 4.5 11 Z" fill="#c6c6c6"/></g><g transform="translate(28,0)"><path transform="translate(0,0.5)" d="M4.5 11 C1.5 11 0 9.5 0.2 7.5 C0.3 6.5 0.8 5.5 1.2 3.2 L2.3 6 C2.8 4 4 2 6.2 0 C6 2 6.3 4 6.9 6 L7.7 3.2 C8.4 5 9 6.5 9 8 C9 10 7.5 11 4.5 11 Z" fill="#c6c6c6"/></g></svg><svg style="position:absolute;left:34px;top:365px" width="5" height="8"><path d="M0 0 L4.5 3.75 L0 7.5 Z" fill="#6a6a6a"/></svg><svg style="position:absolute;left:48px;top:360px" width="17" height="17" viewBox="0 0 17 17"><circle cx="5" cy="4.02" r="2.52" fill="#3a78c2"/><path d="M0.5899999999999999 12.0 Q0.5899999999999999 7.065 5 7.065 Q9.41 7.065 9.41 12.0 Z" fill="#3a78c2"/><circle cx="12.5" cy="2.5" r="2" fill="none" stroke="#9ab8dc" stroke-width="0.9"/><path d="M9.5 11 v-1.5 a2 2 0 0 1 4 0 V11" stroke="#6b6b6b" stroke-width="1" fill="none"/><rect x="8.5" y="11" width="7" height="5" fill="#6b6b6b"/></svg><div style="position:absolute;left:69px;top:363px;width:240px;overflow:hidden;font-size:11.5px;line-height:1;white-space:nowrap;color:#333">Временная выдача прав доступа AD</div><div style="position:absolute;right:62px;top:361px;font-size:11px;line-height:1;white-space:nowrap;color:#333;text-align:right">63</div><svg style="position:absolute;left:401px;top:361px" width="40" height="13"><g transform="translate(0,0)"><path transform="translate(0,0.5)" d="M4.5 11 C1.5 11 0 9.5 0.2 7.5 C0.3 6.5 0.8 5.5 1.2 3.2 L2.3 6 C2.8 4 4 2 6.2 0 C6 2 6.3 4 6.9 6 L7.7 3.2 C8.4 5 9 6.5 9 8 C9 10 7.5 11 4.5 11 Z" fill="#e9ae48"/></g><g transform="translate(14,0)"><path transform="translate(0,0.5)" d="M4.5 11 C1.5 11 0 9.5 0.2 7.5 C0.3 6.5 0.8 5.5 1.2 3.2 L2.3 6 C2.8 4 4 2 6.2 0 C6 2 6.3 4 6.9 6 L7.7 3.2 C8.4 5 9 6.5 9 8 C9 10 7.5 11 4.5 11 Z" fill="#c6c6c6"/></g><g transform="translate(28,0)"><path transform="translate(0,0.5)" d="M4.5 11 C1.5 11 0 9.5 0.2 7.5 C0.3 6.5 0.8 5.5 1.2 3.2 L2.3 6 C2.8 4 4 2 6.2 0 C6 2 6.3 4 6.9 6 L7.7 3.2 C8.4 5 9 6.5 9 8 C9 10 7.5 11 4.5 11 Z" fill="#c6c6c6"/></g></svg><svg style="position:absolute;left:34px;top:386px" width="5" height="8"><path d="M0 0 L4.5 3.75 L0 7.5 Z" fill="#6a6a6a"/></svg><svg style="position:absolute;left:48px;top:381px" width="17" height="17" viewBox="0 0 17 17"><circle cx="5" cy="4.02" r="2.52" fill="#3a78c2"/><path d="M0.5899999999999999 12.0 Q0.5899999999999999 7.065 5 7.065 Q9.41 7.065 9.41 12.0 Z" fill="#3a78c2"/><circle cx="12.5" cy="2.5" r="2" fill="none" stroke="#9ab8dc" stroke-width="0.9"/><path d="M8.5 12.5 h7 M12 9 v7" stroke="#6b6b6b" stroke-width="1.5"/></svg><div style="position:absolute;left:69px;top:384px;width:240px;overflow:hidden;font-size:11.5px;line-height:1;white-space:nowrap;color:#333">Создание временной учетной записи</div><div style="position:absolute;right:62px;top:382px;font-size:11px;line-height:1;white-space:nowrap;color:#333;text-align:right">61</div><svg style="position:absolute;left:401px;top:382px" width="40" height="13"><g transform="translate(0,0)"><path transform="translate(0,0.5)" d="M4.5 11 C1.5 11 0 9.5 0.2 7.5 C0.3 6.5 0.8 5.5 1.2 3.2 L2.3 6 C2.8 4 4 2 6.2 0 C6 2 6.3 4 6.9 6 L7.7 3.2 C8.4 5 9 6.5 9 8 C9 10 7.5 11 4.5 11 Z" fill="#e9ae48"/></g><g transform="translate(14,0)"><path transform="translate(0,0.5)" d="M4.5 11 C1.5 11 0 9.5 0.2 7.5 C0.3 6.5 0.8 5.5 1.2 3.2 L2.3 6 C2.8 4 4 2 6.2 0 C6 2 6.3 4 6.9 6 L7.7 3.2 C8.4 5 9 6.5 9 8 C9 10 7.5 11 4.5 11 Z" fill="#c6c6c6"/></g><g transform="translate(28,0)"><path transform="translate(0,0.5)" d="M4.5 11 C1.5 11 0 9.5 0.2 7.5 C0.3 6.5 0.8 5.5 1.2 3.2 L2.3 6 C2.8 4 4 2 6.2 0 C6 2 6.3 4 6.9 6 L7.7 3.2 C8.4 5 9 6.5 9 8 C9 10 7.5 11 4.5 11 Z" fill="#c6c6c6"/></g></svg><svg style="position:absolute;left:34px;top:407px" width="5" height="8"><path d="M0 0 L4.5 3.75 L0 7.5 Z" fill="#6a6a6a"/></svg><svg style="position:absolute;left:48px;top:402px" width="17" height="17" viewBox="0 0 17 17"><circle cx="5" cy="3.02" r="2.52" fill="#3a78c2"/><path d="M0.5899999999999999 11.0 Q0.5899999999999999 6.065 5 6.065 Q9.41 6.065 9.41 11.0 Z" fill="#3a78c2"/><path d="M15 5.5 L4.5 15.5" stroke="#6b6b6b" stroke-width="1.6"/><path d="M15 5.5 L13 7.5" stroke="#222" stroke-width="2"/></svg><div style="position:absolute;left:69px;top:405px;width:240px;overflow:hidden;font-size:11.5px;line-height:1;white-space:nowrap;color:#333">Операции над учетной записью</div><div style="position:absolute;right:62px;top:403px;font-size:11px;line-height:1;white-space:nowrap;color:#333;text-align:right">1166</div><svg style="position:absolute;left:401px;top:403px" width="40" height="13"><g transform="translate(0,0)"><path transform="translate(0,0.5)" d="M4.5 11 C1.5 11 0 9.5 0.2 7.5 C0.3 6.5 0.8 5.5 1.2 3.2 L2.3 6 C2.8 4 4 2 6.2 0 C6 2 6.3 4 6.9 6 L7.7 3.2 C8.4 5 9 6.5 9 8 C9 10 7.5 11 4.5 11 Z" fill="#e9ae48"/></g><g transform="translate(14,0)"><path transform="translate(0,0.5)" d="M4.5 11 C1.5 11 0 9.5 0.2 7.5 C0.3 6.5 0.8 5.5 1.2 3.2 L2.3 6 C2.8 4 4 2 6.2 0 C6 2 6.3 4 6.9 6 L7.7 3.2 C8.4 5 9 6.5 9 8 C9 10 7.5 11 4.5 11 Z" fill="#c6c6c6"/></g><g transform="translate(28,0)"><path transform="translate(0,0.5)" d="M4.5 11 C1.5 11 0 9.5 0.2 7.5 C0.3 6.5 0.8 5.5 1.2 3.2 L2.3 6 C2.8 4 4 2 6.2 0 C6 2 6.3 4 6.9 6 L7.7 3.2 C8.4 5 9 6.5 9 8 C9 10 7.5 11 4.5 11 Z" fill="#c6c6c6"/></g></svg><svg style="position:absolute;left:34px;top:428px" width="5" height="8"><path d="M0 0 L4.5 3.75 L0 7.5 Z" fill="#6a6a6a"/></svg><svg style="position:absolute;left:48px;top:423px" width="17" height="17" viewBox="0 0 17 17"><circle cx="5" cy="2.6" r="2.2" fill="#d9342b"/><path d="M0.5 9 Q0.5 5 5 5 Q9.5 5 9.5 9 Z" fill="#d9342b"/><path d="M2.5 7 l2 2 L8 5" stroke="#fff" stroke-width="1" fill="none"/><path d="M14 4.5 L3.5 15" stroke="#6b6b6b" stroke-width="1.4"/><circle cx="12.5" cy="10.728" r="1.728" fill="#6b6b6b"/><path d="M9.475999999999999 16.2 Q9.475999999999999 12.815999999999999 12.5 12.815999999999999 Q15.524000000000001 12.815999999999999 15.524000000000001 16.2 Z" fill="#6b6b6b"/></svg><div style="position:absolute;left:69px;top:426px;width:240px;overflow:hidden;font-size:11.5px;line-height:1;white-space:nowrap;color:#333">Изменение состава критичных групп пользователей</div><div style="position:absolute;right:62px;top:424px;font-size:11px;line-height:1;white-space:nowrap;color:#333;text-align:right">0</div><svg style="position:absolute;left:401px;top:424px" width="40" height="13"><g transform="translate(0,0)"><path transform="translate(0,0.5)" d="M4.5 11 C1.5 11 0 9.5 0.2 7.5 C0.3 6.5 0.8 5.5 1.2 3.2 L2.3 6 C2.8 4 4 2 6.2 0 C6 2 6.3 4 6.9 6 L7.7 3.2 C8.4 5 9 6.5 9 8 C9 10 7.5 11 4.5 11 Z" fill="#e9ae48"/></g><g transform="translate(14,0)"><path transform="translate(0,0.5)" d="M4.5 11 C1.5 11 0 9.5 0.2 7.5 C0.3 6.5 0.8 5.5 1.2 3.2 L2.3 6 C2.8 4 4 2 6.2 0 C6 2 6.3 4 6.9 6 L7.7 3.2 C8.4 5 9 6.5 9 8 C9 10 7.5 11 4.5 11 Z" fill="#c6c6c6"/></g><g transform="translate(28,0)"><path transform="translate(0,0.5)" d="M4.5 11 C1.5 11 0 9.5 0.2 7.5 C0.3 6.5 0.8 5.5 1.2 3.2 L2.3 6 C2.8 4 4 2 6.2 0 C6 2 6.3 4 6.9 6 L7.7 3.2 C8.4 5 9 6.5 9 8 C9 10 7.5 11 4.5 11 Z" fill="#c6c6c6"/></g></svg><svg style="position:absolute;left:12px;top:449px" width="7" height="7"><path d="M6.5 0 L6.5 6.5 L0 6.5 Z" fill="#6a6a6a"/></svg><svg style="position:absolute;left:27px;top:443px" width="17" height="17" viewBox="0 0 17 17"><path d="M1.5 0.5 H10 L14.5 5 V15.5 H1.5 Z" fill="#fff" stroke="#6b6b6b" stroke-width="1"/><path d="M10 0.5 V5 H14.5" fill="none" stroke="#6b6b6b" stroke-width="1"/><path d="M4 4 h3 M4 6 h4" stroke="#6b6b6b" stroke-width="0.8"/><path d="M3 12 q1.5 -3 2.5 0 q1 3 2.5 -1 q1 -2 2 0 q0.8 1.5 2 -1" stroke="#2b2b2b" stroke-width="0.9" fill="none"/><path d="M3 13 h10" stroke="#6b6b6b" stroke-width="0.6"/></svg><div style="position:absolute;left:48px;top:447px;font-size:11.5px;line-height:1;white-space:nowrap;color:#333">AD. Другие события</div><div style="position:absolute;right:62px;top:445px;font-size:11px;line-height:1;white-space:nowrap;color:#333;text-align:right">0</div><svg style="position:absolute;left:34px;top:470px" width="5" height="8"><path d="M0 0 L4.5 3.75 L0 7.5 Z" fill="#6a6a6a"/></svg><svg style="position:absolute;left:48px;top:465px" width="17" height="17" viewBox="0 0 17 17"><rect x="1.5" y="0" width="10" height="12" fill="#3a78c2"/><path d="M0.5 2 h2.5 M0.5 4.5 h2.5 M0.5 7 h2.5 M0.5 9.5 h2.5" stroke="#9ab8dc" stroke-width="0.9"/><path d="M6 11 L10 7.5 L14.5 11.5 L11 15 H8 Z" fill="#fff" stroke="#6b6b6b" stroke-width="1"/><path d="M8 10 L12 13.5" stroke="#6b6b6b" stroke-width="0.8"/></svg><div style="position:absolute;left:69px;top:468px;width:240px;overflow:hidden;font-size:11.5px;line-height:1;white-space:nowrap;color:#333">Очистка журнала событий пользователем</div><div style="position:absolute;right:62px;top:466px;font-size:11px;line-height:1;white-space:nowrap;color:#333;text-align:right">3</div><svg style="position:absolute;left:401px;top:466px" width="40" height="13"><g transform="translate(0,0)"><path transform="translate(0,0.5)" d="M4.5 11 C1.5 11 0 9.5 0.2 7.5 C0.3 6.5 0.8 5.5 1.2 3.2 L2.3 6 C2.8 4 4 2 6.2 0 C6 2 6.3 4 6.9 6 L7.7 3.2 C8.4 5 9 6.5 9 8 C9 10 7.5 11 4.5 11 Z" fill="#e9ae48"/></g><g transform="translate(14,0)"><path transform="translate(0,0.5)" d="M4.5 11 C1.5 11 0 9.5 0.2 7.5 C0.3 6.5 0.8 5.5 1.2 3.2 L2.3 6 C2.8 4 4 2 6.2 0 C6 2 6.3 4 6.9 6 L7.7 3.2 C8.4 5 9 6.5 9 8 C9 10 7.5 11 4.5 11 Z" fill="#c6c6c6"/></g><g transform="translate(28,0)"><path transform="translate(0,0.5)" d="M4.5 11 C1.5 11 0 9.5 0.2 7.5 C0.3 6.5 0.8 5.5 1.2 3.2 L2.3 6 C2.8 4 4 2 6.2 0 C6 2 6.3 4 6.9 6 L7.7 3.2 C8.4 5 9 6.5 9 8 C9 10 7.5 11 4.5 11 Z" fill="#c6c6c6"/></g></svg><svg style="position:absolute;left:48px;top:486px" width="17" height="17" viewBox="0 0 17 17"><rect x="0.5" y="1" width="14" height="12" fill="#fff" stroke="#7aa3d8" stroke-width="1"/><rect x="0" y="0" width="15" height="2.5" fill="#3a78c2"/><path d="M4 3 V12 M7 3 V12 M10 3 V10 M1 6 H13 M1 9 H11" stroke="#c8c8c8" stroke-width="1"/><rect x="1" y="3" width="12" height="9" fill="#e6e6e6" opacity="0.5"/><path d="M15 6 L6 15.5" stroke="#6b6b6b" stroke-width="1.5"/></svg><div style="position:absolute;left:69px;top:489px;width:240px;overflow:hidden;font-size:11.5px;line-height:1;white-space:nowrap;color:#333">Изменение политики аудита</div><div style="position:absolute;right:62px;top:487px;font-size:11px;line-height:1;white-space:nowrap;color:#333;text-align:right">2</div><svg style="position:absolute;left:401px;top:487px" width="40" height="13"><g transform="translate(0,0)"><path transform="translate(0,0.5)" d="M4.5 11 C1.5 11 0 9.5 0.2 7.5 C0.3 6.5 0.8 5.5 1.2 3.2 L2.3 6 C2.8 4 4 2 6.2 0 C6 2 6.3 4 6.9 6 L7.7 3.2 C8.4 5 9 6.5 9 8 C9 10 7.5 11 4.5 11 Z" fill="#e9ae48"/></g><g transform="translate(14,0)"><path transform="translate(0,0.5)" d="M4.5 11 C1.5 11 0 9.5 0.2 7.5 C0.3 6.5 0.8 5.5 1.2 3.2 L2.3 6 C2.8 4 4 2 6.2 0 C6 2 6.3 4 6.9 6 L7.7 3.2 C8.4 5 9 6.5 9 8 C9 10 7.5 11 4.5 11 Z" fill="#c6c6c6"/></g><g transform="translate(28,0)"><path transform="translate(0,0.5)" d="M4.5 11 C1.5 11 0 9.5 0.2 7.5 C0.3 6.5 0.8 5.5 1.2 3.2 L2.3 6 C2.8 4 4 2 6.2 0 C6 2 6.3 4 6.9 6 L7.7 3.2 C8.4 5 9 6.5 9 8 C9 10 7.5 11 4.5 11 Z" fill="#c6c6c6"/></g></svg><svg style="position:absolute;left:12px;top:512px" width="7" height="7"><path d="M6.5 0 L6.5 6.5 L0 6.5 Z" fill="#6a6a6a"/></svg><svg style="position:absolute;left:27px;top:506px" width="17" height="17" viewBox="0 0 17 17"><path d="M3.5 0.5 H11 L15.5 5 V15.5 H3.5 Z" fill="#fff" stroke="#2b2b2b" stroke-width="1"/><path d="M11 0.5 V5 H15.5" fill="none" stroke="#2b2b2b" stroke-width="1"/><path d="M6.5 7 h6 M6.5 9.5 h6 M6.5 12 h6" stroke="#6b6b6b" stroke-width="1"/><path d="M0 4.5 L8 4.5 L3 13 Z" fill="#d9342b"/></svg><div style="position:absolute;left:48px;top:510px;font-size:11.5px;line-height:1;white-space:nowrap;color:#333">События FileController</div><div style="position:absolute;right:62px;top:508px;font-size:11px;line-height:1;white-space:nowrap;color:#333;text-align:right">0</div><svg style="position:absolute;left:34px;top:533px" width="5" height="8"><path d="M0 0 L4.5 3.75 L0 7.5 Z" fill="#6a6a6a"/></svg><svg style="position:absolute;left:48px;top:528px" width="17" height="17" viewBox="0 0 17 17"><path d="M0.5 2 H5 L6.5 3.5 H12.5 V13 H0.5 Z" fill="#6b6b6b"/><path d="M1 5 H14 L12.5 13 H0.5 Z" fill="#2b5fa8"/><circle cx="13.5" cy="2.5" r="2" fill="none" stroke="#9ab8dc" stroke-width="0.9"/><path d="M3.5 12 q3 -6 6 -1" stroke="#fff" stroke-width="1.2" fill="none"/><rect x="9" y="11" width="6.5" height="5" fill="#444"/><path d="M10.5 11 v-1.3 a1.7 1.7 0 0 1 3.4 0 V11" stroke="#444" stroke-width="1" fill="none"/></svg><div style="position:absolute;left:69px;top:531px;width:240px;overflow:hidden;font-size:11.5px;line-height:1;white-space:nowrap;color:#333">Временная выдача прав на файл/папку</div><div style="position:absolute;right:62px;top:529px;font-size:11px;line-height:1;white-space:nowrap;color:#333;text-align:right">6</div><svg style="position:absolute;left:401px;top:529px" width="40" height="13"><g transform="translate(0,0)"><path transform="translate(0,0.5)" d="M4.5 11 C1.5 11 0 9.5 0.2 7.5 C0.3 6.5 0.8 5.5 1.2 3.2 L2.3 6 C2.8 4 4 2 6.2 0 C6 2 6.3 4 6.9 6 L7.7 3.2 C8.4 5 9 6.5 9 8 C9 10 7.5 11 4.5 11 Z" fill="#e9ae48"/></g><g transform="translate(14,0)"><path transform="translate(0,0.5)" d="M4.5 11 C1.5 11 0 9.5 0.2 7.5 C0.3 6.5 0.8 5.5 1.2 3.2 L2.3 6 C2.8 4 4 2 6.2 0 C6 2 6.3 4 6.9 6 L7.7 3.2 C8.4 5 9 6.5 9 8 C9 10 7.5 11 4.5 11 Z" fill="#c6c6c6"/></g><g transform="translate(28,0)"><path transform="translate(0,0.5)" d="M4.5 11 C1.5 11 0 9.5 0.2 7.5 C0.3 6.5 0.8 5.5 1.2 3.2 L2.3 6 C2.8 4 4 2 6.2 0 C6 2 6.3 4 6.9 6 L7.7 3.2 C8.4 5 9 6.5 9 8 C9 10 7.5 11 4.5 11 Z" fill="#c6c6c6"/></g></svg><svg style="position:absolute;left:34px;top:554px" width="5" height="8"><path d="M0 0 L4.5 3.75 L0 7.5 Z" fill="#6a6a6a"/></svg><svg style="position:absolute;left:48px;top:549px" width="17" height="17" viewBox="0 0 17 17"><path d="M0.5 1 H5.5 L7 2.5 H14 V12 H0.5 Z" fill="#b3281f"/><path d="M1.5 4.5 H15.5 L13.5 14 H0.5 Z" fill="#e0473a"/><path d="M5 9 h6 M8 7 l3 2 -3 2" stroke="#fff" stroke-width="1" fill="none"/></svg><div style="position:absolute;left:69px;top:552px;width:240px;overflow:hidden;font-size:11.5px;line-height:1;white-space:nowrap;color:#333">Обращение к критичным ресурсам</div><div style="position:absolute;right:62px;top:550px;font-size:11px;line-height:1;white-space:nowrap;color:#333;text-align:right">152</div><svg style="position:absolute;left:401px;top:550px" width="40" height="13"><g transform="translate(0,0)"><path transform="translate(0,0.5)" d="M4.5 11 C1.5 11 0 9.5 0.2 7.5 C0.3 6.5 0.8 5.5 1.2 3.2 L2.3 6 C2.8 4 4 2 6.2 0 C6 2 6.3 4 6.9 6 L7.7 3.2 C8.4 5 9 6.5 9 8 C9 10 7.5 11 4.5 11 Z" fill="#e9ae48"/></g><g transform="translate(14,0)"><path transform="translate(0,0.5)" d="M4.5 11 C1.5 11 0 9.5 0.2 7.5 C0.3 6.5 0.8 5.5 1.2 3.2 L2.3 6 C2.8 4 4 2 6.2 0 C6 2 6.3 4 6.9 6 L7.7 3.2 C8.4 5 9 6.5 9 8 C9 10 7.5 11 4.5 11 Z" fill="#c6c6c6"/></g><g transform="translate(28,0)"><path transform="translate(0,0.5)" d="M4.5 11 C1.5 11 0 9.5 0.2 7.5 C0.3 6.5 0.8 5.5 1.2 3.2 L2.3 6 C2.8 4 4 2 6.2 0 C6 2 6.3 4 6.9 6 L7.7 3.2 C8.4 5 9 6.5 9 8 C9 10 7.5 11 4.5 11 Z" fill="#c6c6c6"/></g></svg></div><div style="position:absolute;left:450px;top:150px;width:16px;height:559px;background:#f0f0f0"></div><div style="position:absolute;left:450px;top:166px;width:16px;height:235px;background:#cdcdcd"></div><svg style="position:absolute;left:452px;top:153px;" width="12" height="10" viewBox="0 0 12 10"><path d="M2 7 L6 3 L10 7" stroke="#606060" stroke-width="1.8" fill="none"/></svg><svg style="position:absolute;left:452px;top:696px;" width="12" height="10" viewBox="0 0 12 10"><path d="M2 3 L6 7 L10 3" stroke="#606060" stroke-width="1.8" fill="none"/></svg><div style="position:absolute;left:6px;top:716px;width:460px;height:1px;background:#d6d6d6"></div><div style="position:absolute;top:746px;font-size:11px;line-height:1;white-space:nowrap;color:#333;font-weight:normal;left:10px;">Дата инцидента:</div><div style="position:absolute;top:733px;font-size:11px;line-height:1;white-space:nowrap;color:#333;font-weight:normal;right:1748px;text-align:right;">С:</div><div style="position:absolute;left:183px;top:729px;width:255px;height:18px;background:#fff;border:1px solid #c4c4c4"></div><div style="position:absolute;left:421px;top:729px;width:17px;height:18px;background:#eeeeee;border:1px solid #c4c4c4"></div><svg style="position:absolute;left:424px;top:733px;" width="11" height="10" viewBox="0 0 11 10"><path d="M1.5 2.5 L5.5 7 L9.5 2.5" stroke="#707070" stroke-width="1.6" fill="none"/></svg><div style="position:absolute;left:185px;top:733px;font-size:11px;line-height:1;white-space:nowrap;color:#222">09.04.2018</div><div style="position:absolute;top:761px;font-size:11px;line-height:1;white-space:nowrap;color:#333;font-weight:normal;right:1748px;text-align:right;">По:</div><div style="position:absolute;left:183px;top:757px;width:255px;height:18px;background:#fff;border:1px solid #c4c4c4"></div><div style="position:absolute;left:421px;top:757px;width:17px;height:18px;background:#eeeeee;border:1px solid #c4c4c4"></div><svg style="position:absolute;left:424px;top:761px;" width="11" height="10" viewBox="0 0 11 10"><path d="M1.5 2.5 L5.5 7 L9.5 2.5" stroke="#707070" stroke-width="1.6" fill="none"/></svg><div style="position:absolute;left:185px;top:761px;font-size:11px;line-height:1;white-space:nowrap;color:#222">10.04.2018 23:59:59</div><div style="position:absolute;top:786px;font-size:11px;line-height:1;white-space:nowrap;color:#333;font-weight:normal;left:10px;">Флаг:</div><div style="position:absolute;left:125px;top:781px;width:48px;height:19px;background:#fff;border:1px solid #c4c4c4"></div><div style="position:absolute;left:156px;top:781px;width:17px;height:19px;background:#eeeeee;border:1px solid #c4c4c4"></div><svg style="position:absolute;left:159px;top:785px;" width="11" height="10" viewBox="0 0 11 10"><path d="M1.5 2.5 L5.5 7 L9.5 2.5" stroke="#707070" stroke-width="1.6" fill="none"/></svg><div style="position:absolute;left:128px;top:787px;font-size:11px;line-height:1;white-space:nowrap;color:#222">вкл.</div><div style="position:absolute;left:183px;top:781px;width:255px;height:19px;background:#fff;border:1px solid #c4c4c4"></div><div style="position:absolute;left:421px;top:781px;width:17px;height:19px;background:#eeeeee;border:1px solid #c4c4c4"></div><svg style="position:absolute;left:424px;top:785px;" width="11" height="10" viewBox="0 0 11 10"><path d="M1.5 2.5 L5.5 7 L9.5 2.5" stroke="#707070" stroke-width="1.6" fill="none"/></svg><div style="position:absolute;left:10px;top:808px;width:433px;height:1px;background:#d6d6d6"></div><div style="position:absolute;top:834px;font-size:11px;line-height:1;white-space:nowrap;color:#333;font-weight:normal;left:10px;">Дата события:</div><div style="position:absolute;top:821px;font-size:11px;line-height:1;white-space:nowrap;color:#333;font-weight:normal;right:1748px;text-align:right;">С:</div><div style="position:absolute;left:180px;top:816px;width:258px;height:19px;background:#fff;border:1px solid #c4c4c4"></div><div style="position:absolute;left:421px;top:816px;width:17px;height:19px;background:#eeeeee;border:1px solid #c4c4c4"></div><svg style="position:absolute;left:424px;top:820px;" width="11" height="10" viewBox="0 0 11 10"><path d="M1.5 2.5 L5.5 7 L9.5 2.5" stroke="#707070" stroke-width="1.6" fill="none"/></svg><div style="position:absolute;left:182px;top:820px;font-size:11px;line-height:1;white-space:nowrap;color:#222">09.04.2018</div><div style="position:absolute;top:848px;font-size:11px;line-height:1;white-space:nowrap;color:#333;font-weight:normal;right:1748px;text-align:right;">По:</div><div style="position:absolute;left:180px;top:843px;width:258px;height:18px;background:#fff;border:1px solid #c4c4c4"></div><div style="position:absolute;left:421px;top:843px;width:17px;height:18px;background:#eeeeee;border:1px solid #c4c4c4"></div><svg style="position:absolute;left:424px;top:847px;" width="11" height="10" viewBox="0 0 11 10"><path d="M1.5 2.5 L5.5 7 L9.5 2.5" stroke="#707070" stroke-width="1.6" fill="none"/></svg><div style="position:absolute;left:182px;top:847px;font-size:11px;line-height:1;white-space:nowrap;color:#222">10.04.2018 23:59:59</div><div style="position:absolute;top:873px;font-size:11px;line-height:1;white-space:nowrap;color:#333;font-weight:normal;left:10px;">Компьютер:</div><div style="position:absolute;left:124px;top:869px;width:48px;height:19px;background:#fff;border:1px solid #c4c4c4"></div><div style="position:absolute;left:155px;top:869px;width:17px;height:19px;background:#eeeeee;border:1px solid #c4c4c4"></div><svg style="position:absolute;left:158px;top:873px;" width="11" height="10" viewBox="0 0 11 10"><path d="M1.5 2.5 L5.5 7 L9.5 2.5" stroke="#707070" stroke-width="1.6" fill="none"/></svg><div style="position:absolute;left:127px;top:875px;font-size:11px;line-height:1;white-space:nowrap;color:#222">вкл.</div><div style="position:absolute;left:180px;top:869px;width:258px;height:19px;background:#f0f0f0;border:1px solid #c4c4c4"></div><div style="position:absolute;left:418px;top:869px;width:20px;height:19px;background:#f0f0f0;border:1px solid #c4c4c4"></div><svg style="position:absolute;left:420px;top:871px;" width="16" height="15" viewBox="0 0 16 15"><rect x="1" y="1" width="14" height="9" fill="#fff" stroke="#2d6db5" stroke-width="2"/><rect x="2.5" y="2.5" width="11" height="6" fill="#dfeaf7"/><rect x="6" y="10" width="4" height="2" fill="#2d6db5"/><rect x="3" y="12" width="10" height="2" fill="#2d6db5"/></svg><div style="position:absolute;top:900px;font-size:11px;line-height:1;white-space:nowrap;color:#333;font-weight:normal;left:10px;">Имя учетной записи:</div><div style="position:absolute;left:124px;top:895px;width:48px;height:19px;background:#fff;border:1px solid #c4c4c4"></div><div style="position:absolute;left:155px;top:895px;width:17px;height:19px;background:#eeeeee;border:1px solid #c4c4c4"></div><svg style="position:absolute;left:158px;top:899px;" width="11" height="10" viewBox="0 0 11 10"><path d="M1.5 2.5 L5.5 7 L9.5 2.5" stroke="#707070" stroke-width="1.6" fill="none"/></svg><div style="position:absolute;left:127px;top:901px;font-size:11px;line-height:1;white-space:nowrap;color:#222">вкл.</div><div style="position:absolute;left:180px;top:895px;width:258px;height:19px;background:#f0f0f0;border:1px solid #c4c4c4"></div><div style="position:absolute;left:418px;top:895px;width:20px;height:19px;background:#f0f0f0;border:1px solid #c4c4c4"></div><div style="position:absolute;left:182px;top:899px;font-size:11px;line-height:1;white-space:nowrap;color:#222">user1403 (user1403),user1403 (user1403)</div><svg style="position:absolute;left:420px;top:897px;" width="16" height="15" viewBox="0 0 16 15"><circle cx="8" cy="5.5" r="3.6" fill="#fff" stroke="#555" stroke-width="1.4"/><path d="M1.5 15 C2 10.5 5 9.5 8 9.5 C11 9.5 14 10.5 14.5 15 Z" fill="#555"/></svg><div style="position:absolute;top:921px;font-size:11.35px;line-height:1;white-space:nowrap;color:#2b79c2;font-weight:normal;left:313px;">Показать все фильтры...</div><div style="position:absolute;left:449px;top:721px;width:16px;height:211px;background:#f0f0f0"></div><div style="position:absolute;left:449px;top:737px;width:16px;height:174px;background:#cdcdcd"></div><svg style="position:absolute;left:451px;top:724px;" width="12" height="10" viewBox="0 0 12 10"><path d="M2 7 L6 3 L10 7" stroke="#606060" stroke-width="1.8" fill="none"/></svg><svg style="position:absolute;left:451px;top:919px;" width="12" height="10" viewBox="0 0 12 10"><path d="M2 3 L6 7 L10 3" stroke="#606060" stroke-width="1.8" fill="none"/></svg><div style="position:absolute;left:24px;top:935px;width:292px;height:23px;background:#e9e9e9;border:1px solid #adadad"></div><svg style="position:absolute;left:110px;top:938px;" width="18" height="17" viewBox="0 0 18 17"><rect x="1" y="1" width="13" height="13" rx="1.5" fill="none" stroke="#2d7ccc" stroke-width="1.6"/><path d="M4 5h6M4 8h4M4 11h3" stroke="#2d7ccc" stroke-width="1.2"/><circle cx="11.5" cy="11" r="3" fill="#fff" stroke="#2d7ccc" stroke-width="1.5"/><path d="M13.5 13 L16.5 16" stroke="#2d7ccc" stroke-width="1.8"/></svg><div style="position:absolute;top:941px;font-size:11px;line-height:1;white-space:nowrap;color:#333;font-weight:normal;left:131px;">Показать события</div><div style="position:absolute;left:347px;top:935px;width:60px;height:23px;background:#e9e9e9;border:1px solid #adadad"></div><svg style="position:absolute;left:350px;top:938px;" width="18" height="17" viewBox="0 0 18 17"><path d="M15 2 L9 9" stroke="#2a6fc0" stroke-width="2.2"/><path d="M3 10 C6 8 9 8 11 11 C9 15 5 16 2 15 Z" fill="#3d82d0"/><circle cx="3" cy="4" r="1" fill="#3d82d0"/><circle cx="6" cy="6" r="0.9" fill="#3d82d0"/></svg><div style="position:absolute;top:941px;font-size:11px;line-height:1;white-space:nowrap;color:#333;font-weight:normal;left:371px;">Сброс</div><div style="position:absolute;left:438px;top:935px;width:21px;height:23px;background:#e9e9e9;border:1px solid #adadad"></div><svg style="position:absolute;left:440px;top:937px;" width="17" height="18" viewBox="0 0 17 18"><g transform="translate(8.5,9)"><circle r="5.3" fill="none" stroke="#2f72c4" stroke-width="2.6"/><rect x="-1.4" y="-8" width="2.8" height="3.5" fill="#2f72c4" transform="rotate(0)"/><rect x="-1.4" y="-8" width="2.8" height="3.5" fill="#2f72c4" transform="rotate(45)"/><rect x="-1.4" y="-8" width="2.8" height="3.5" fill="#2f72c4" transform="rotate(90)"/><rect x="-1.4" y="-8" width="2.8" height="3.5" fill="#2f72c4" transform="rotate(135)"/><rect x="-1.4" y="-8" width="2.8" height="3.5" fill="#2f72c4" transform="rotate(180)"/><rect x="-1.4" y="-8" width="2.8" height="3.5" fill="#2f72c4" transform="rotate(225)"/><rect x="-1.4" y="-8" width="2.8" height="3.5" fill="#2f72c4" transform="rotate(270)"/><rect x="-1.4" y="-8" width="2.8" height="3.5" fill="#2f72c4" transform="rotate(315)"/></g></svg><div style="position:absolute;top:976px;font-size:23px;line-height:1;white-space:nowrap;color:#56a2e3;font-weight:normal;left:8px;">Правила</div><div style="position:absolute;top:976px;font-size:23px;line-height:1;white-space:nowrap;color:#6a6a6a;font-weight:normal;left:113px;">Настройки</div><div style="position:absolute;left:493px;top:94px;width:1417px;height:128px;background:#fff;border:1px solid #d4d4d4"></div><div style="position:absolute;left:494px;top:95px;width:1415px;height:17px;background:#f6f6f6"></div><div style="position:absolute;top:99px;font-size:11px;line-height:1;white-space:nowrap;color:#111;font-weight:normal;left:503px;">Статистика входов в систему</div><div style="position:absolute;left:1883px;top:97px;width:16px;height:15px;background:#f4f4f4;border:1px solid #333"></div><svg style="position:absolute;left:1884px;top:98px;" width="14" height="13" viewBox="0 0 14 13"><path d="M3.5 6 L7 2.8 L10.5 6 M3.5 10 L7 6.8 L10.5 10" stroke="#222" stroke-width="1.3" fill="none"/></svg><div style="position:absolute;top:122px;font-size:11px;line-height:1;white-space:nowrap;color:#2a86e0;font-weight:bold;left:506px;">Описание:</div><div style="position:absolute;top:135px;font-size:11.25px;line-height:1;white-space:nowrap;color:#111;font-weight:normal;left:505px;">Инциденты отображают статистику входов пользователей в систему.</div><div style="position:absolute;top:161px;font-size:11px;line-height:1;white-space:nowrap;color:#2a86e0;font-weight:bold;left:506px;">Угроза:</div><div style="position:absolute;top:174px;font-size:11.17px;line-height:1;white-space:nowrap;color:#111;font-weight:normal;left:505px;">Статистика позволяет проследить поведение в системе определенного сотрудника или группы сотрудников. Данный отчет может быть полезен при расследовании инцидентов.</div><div style="position:absolute;left:507px;top:239px;width:1373px;height:20px;background:#fff;border:1px solid #b9b9b9"></div><div style="position:absolute;left:1862px;top:239px;width:18px;height:20px;background:#eeeeee;border:1px solid #b9b9b9"></div><svg style="position:absolute;left:1865px;top:243px;" width="12" height="11" viewBox="0 0 12 11"><path d="M2 3 L6 7.5 L10 3" stroke="#707070" stroke-width="1.6" fill="none"/></svg><div style="position:absolute;left:509px;top:242px;width:1px;height:14px;background:#000"></div><div style="position:absolute;left:493px;top:269px;width:1417px;height:1px;background:#cfcfcf"></div><div style="position:absolute;top:283px;font-size:11.25px;line-height:1;white-space:nowrap;color:#a8a8a8;font-weight:normal;left:500px;">Перетащите сюда заголовок поля для группировки</div><div style="position:absolute;left:493px;top:304px;width:1417px;height:2px;background:#a5a5a5"></div><div style="position:absolute;left:493px;top:306px;width:1417px;height:18px;background:#fff"></div><div style="position:absolute;left:493px;top:323px;width:1417px;height:1px;background:#b8b8b8"></div><div style="position:absolute;left:493px;top:304px;width:1px;height:343px;background:#c8c8c8"></div><div style="position:absolute;left:1909px;top:304px;width:1px;height:343px;background:#c8c8c8"></div><div style="position:absolute;top:310px;font-size:11.2px;line-height:1;white-space:nowrap;color:#333;font-weight:normal;left:497px;">№</div><div style="position:absolute;left:521px;top:306px;width:1px;height:17px;background:#c8c8c8"></div><div style="position:absolute;top:310px;font-size:11.2px;line-height:1;white-space:nowrap;color:#333;font-weight:normal;left:523px;">Флаг</div><div style="position:absolute;left:550px;top:306px;width:1px;height:17px;background:#c8c8c8"></div><div style="position:absolute;top:310px;font-size:11.2px;line-height:1;white-space:nowrap;color:#333;font-weight:normal;left:552px;">Дата инцидента</div><div style="position:absolute;left:690px;top:306px;width:1px;height:17px;background:#c8c8c8"></div><div style="position:absolute;top:310px;font-size:11.2px;line-height:1;white-space:nowrap;color:#333;font-weight:normal;left:692px;">Дата события</div><div style="position:absolute;left:831px;top:306px;width:1px;height:17px;background:#c8c8c8"></div><div style="position:absolute;top:310px;font-size:11.2px;line-height:1;white-space:nowrap;color:#333;font-weight:normal;left:833px;">Количество входов</div><div style="position:absolute;left:939px;top:306px;width:1px;height:17px;background:#c8c8c8"></div><div style="position:absolute;top:310px;font-size:11.2px;line-height:1;white-space:nowrap;color:#333;font-weight:normal;left:941px;">Пользователь</div><div style="position:absolute;left:1079px;top:306px;width:1px;height:17px;background:#c8c8c8"></div><div style="position:absolute;top:310px;font-size:11.2px;line-height:1;white-space:nowrap;color:#333;font-weight:normal;left:1081px;">Имя пользователя</div><div style="position:absolute;left:1218px;top:306px;width:1px;height:17px;background:#c8c8c8"></div><div style="position:absolute;top:310px;font-size:11.2px;line-height:1;white-space:nowrap;color:#333;font-weight:normal;left:1220px;">Компьютер</div><div style="position:absolute;left:1358px;top:306px;width:1px;height:17px;background:#c8c8c8"></div><div style="position:absolute;top:310px;font-size:11.2px;line-height:1;white-space:nowrap;color:#333;font-weight:normal;left:1360px;">IP-адрес</div><div style="position:absolute;left:1467px;top:306px;width:1px;height:17px;background:#c8c8c8"></div><div style="position:absolute;top:310px;font-size:11.2px;line-height:1;white-space:nowrap;color:#333;font-weight:normal;left:1469px;">Тип входа</div><div style="position:absolute;left:1607px;top:306px;width:1px;height:17px;background:#c8c8c8"></div><div style="position:absolute;top:310px;font-size:11.2px;line-height:1;white-space:nowrap;color:#333;font-weight:normal;left:1609px;">Состояние</div><div style="position:absolute;left:1881px;top:306px;width:1px;height:17px;background:#c8c8c8"></div><svg style="position:absolute;left:1885px;top:309px;" width="14" height="10" viewBox="0 0 14 10"><path d="M3 6.5 C1 6.5 1 2.5 3 2.5 C4.5 2.5 5.5 6.5 7.5 6.5 C9.5 6.5 9.5 2.5 7.5 2.5 C5.5 2.5 4.5 6.5 3 6.5 Z" stroke="#222" stroke-width="1.2" fill="none"/></svg><div style="position:absolute;left:521px;top:324px;width:1388px;height:18px;background:#cce4f7"></div><div style="position:absolute;left:493px;top:342px;width:1417px;height:1px;background:#d8d8d8"></div><div style="position:absolute;left:521px;top:324px;width:1px;height:18px;background:#d8d8d8"></div><div style="position:absolute;left:550px;top:324px;width:1px;height:18px;background:#d8d8d8"></div><div style="position:absolute;left:690px;top:324px;width:1px;height:18px;background:#d8d8d8"></div><div style="position:absolute;left:831px;top:324px;width:1px;height:18px;background:#d8d8d8"></div><div style="position:absolute;left:939px;top:324px;width:1px;height:18px;background:#d8d8d8"></div><div style="position:absolute;left:1079px;top:324px;width:1px;height:18px;background:#d8d8d8"></div><div style="position:absolute;left:1218px;top:324px;width:1px;height:18px;background:#d8d8d8"></div><div style="position:absolute;left:1358px;top:324px;width:1px;height:18px;background:#d8d8d8"></div><div style="position:absolute;left:1467px;top:324px;width:1px;height:18px;background:#d8d8d8"></div><div style="position:absolute;left:1607px;top:324px;width:1px;height:18px;background:#d8d8d8"></div><div style="position:absolute;left:1881px;top:324px;width:1px;height:18px;background:#d8d8d8"></div><div style="position:absolute;top:328px;font-size:11px;line-height:1;white-space:nowrap;color:#555;font-weight:normal;right:1401px;text-align:right;">1</div><div style="position:absolute;top:328px;font-size:11.2px;line-height:1;white-space:nowrap;color:#555;font-weight:normal;left:553px;">09.04.2018 0:15:53</div><div style="position:absolute;top:328px;font-size:11.2px;line-height:1;white-space:nowrap;color:#555;font-weight:normal;left:693px;">09.04.2018 0:05:39</div><div style="position:absolute;top:328px;font-size:11px;line-height:1;white-space:nowrap;color:#555;font-weight:normal;right:982px;text-align:right;">1</div><div style="position:absolute;top:328px;font-size:11px;line-height:1;white-space:nowrap;color:#555;font-weight:normal;left:942px;">LOC\user1403</div><div style="position:absolute;top:328px;font-size:11px;line-height:1;white-space:nowrap;color:#555;font-weight:normal;left:1082px;">user1403</div><div style="position:absolute;top:328px;font-size:11px;line-height:1;white-space:nowrap;color:#555;font-weight:normal;left:1221px;">KVS24</div><div style="position:absolute;top:328px;font-size:11px;line-height:1;white-space:nowrap;color:#555;font-weight:normal;left:1361px;">192.168.171.51</div><svg style="position:absolute;left:1470px;top:325px;" width="18" height="17" viewBox="0 0 18 17"><circle cx="8.4" cy="7.5" r="6.6" fill="none" stroke="#707070" stroke-width="1.3"/><path d="M6.4 1.2 V13.8 M10.4 1.2 V13.8 M2 5 H14.8 M2 9.2 H14.8" stroke="#707070" stroke-width="1.2"/><path d="M9.5 16 V10.5 Q9.5 7.5 12 6.5 H17 V16 Z" fill="#fff"/><ellipse cx="13.7" cy="9.3" rx="2.4" ry="2.2" fill="#2f6fc0"/><path d="M10.2 15.8 Q10.2 12 13.4 12 Q16.6 12 16.6 15.8 Z" fill="#2f6fc0"/></svg><div style="position:absolute;top:328px;font-size:11px;line-height:1;white-space:nowrap;color:#555;font-weight:normal;left:1491px;">Сетевой</div><svg style="position:absolute;left:1610px;top:325px;" width="18" height="17" viewBox="0 0 18 17"><path d="M4.75 12.3 H1.4 V0.6 H9.3 L12.7 3.6" fill="none" stroke="#555555" stroke-width="1.25"/><path d="M8.6 0.6 V4.2" fill="none" stroke="#555555" stroke-width="1.25"/><ellipse cx="11.5" cy="7.8" rx="2.5" ry="2.7" fill="#2e9a6a"/><path d="M5.9 15.8 Q5.9 10.9 11.4 10.9 Q16.9 10.9 16.9 15.8 Z" fill="#2e9a6a"/></svg><div style="position:absolute;top:328px;font-size:11px;line-height:1;white-space:nowrap;color:#555;font-weight:normal;left:1631px;">Вход с учетной записью выполнен успешно</div><svg style="position:absolute;left:1890px;top:329px;" width="8" height="8" viewBox="0 0 8 8"><circle cx="4" cy="4" r="2" fill="none" stroke="#8a9aaa" stroke-width="1"/></svg><div style="position:absolute;left:493px;top:361px;width:1417px;height:1px;background:#d8d8d8"></div><div style="position:absolute;left:521px;top:343px;width:1px;height:18px;background:#d8d8d8"></div><div style="position:absolute;left:550px;top:343px;width:1px;height:18px;background:#d8d8d8"></div><div style="position:absolute;left:690px;top:343px;width:1px;height:18px;background:#d8d8d8"></div><div style="position:absolute;left:831px;top:343px;width:1px;height:18px;background:#d8d8d8"></div><div style="position:absolute;left:939px;top:343px;width:1px;height:18px;background:#d8d8d8"></div><div style="position:absolute;left:1079px;top:343px;width:1px;height:18px;background:#d8d8d8"></div><div style="position:absolute;left:1218px;top:343px;width:1px;height:18px;background:#d8d8d8"></div><div style="position:absolute;left:1358px;top:343px;width:1px;height:18px;background:#d8d8d8"></div><div style="position:absolute;left:1467px;top:343px;width:1px;height:18px;background:#d8d8d8"></div><div style="position:absolute;left:1607px;top:343px;width:1px;height:18px;background:#d8d8d8"></div><div style="position:absolute;left:1881px;top:343px;width:1px;height:18px;background:#d8d8d8"></div><div style="position:absolute;top:347px;font-size:11px;line-height:1;white-space:nowrap;color:#111;font-weight:bold;right:1401px;text-align:right;">2</div><div style="position:absolute;top:347px;font-size:11px;line-height:1;white-space:nowrap;color:#111;font-weight:bold;left:553px;">09.04.2018 1:25:10</div><div style="position:absolute;top:347px;font-size:11px;line-height:1;white-space:nowrap;color:#111;font-weight:bold;left:693px;">09.04.2018 1:14:39</div><div style="position:absolute;top:347px;font-size:11px;line-height:1;white-space:nowrap;color:#111;font-weight:bold;right:982px;text-align:right;">1</div><div style="position:absolute;top:347px;font-size:11px;line-height:1;white-space:nowrap;color:#111;font-weight:bold;left:942px;">LOC\user1403</div><div style="position:absolute;top:347px;font-size:11px;line-height:1;white-space:nowrap;color:#111;font-weight:bold;left:1082px;">user1403</div><div style="position:absolute;top:347px;font-size:11px;line-height:1;white-space:nowrap;color:#111;font-weight:bold;left:1221px;">KVS24</div><div style="position:absolute;top:347px;font-size:11px;line-height:1;white-space:nowrap;color:#111;font-weight:bold;left:1361px;">192.168.171.51</div><svg style="position:absolute;left:1470px;top:344px;" width="18" height="17" viewBox="0 0 18 17"><circle cx="8.4" cy="7.5" r="6.6" fill="none" stroke="#707070" stroke-width="1.3"/><path d="M6.4 1.2 V13.8 M10.4 1.2 V13.8 M2 5 H14.8 M2 9.2 H14.8" stroke="#707070" stroke-width="1.2"/><path d="M9.5 16 V10.5 Q9.5 7.5 12 6.5 H17 V16 Z" fill="#fff"/><ellipse cx="13.7" cy="9.3" rx="2.4" ry="2.2" fill="#2f6fc0"/><path d="M10.2 15.8 Q10.2 12 13.4 12 Q16.6 12 16.6 15.8 Z" fill="#2f6fc0"/></svg><div style="position:absolute;top:347px;font-size:11px;line-height:1;white-space:nowrap;color:#111;font-weight:bold;left:1491px;">Сетевой</div><svg style="position:absolute;left:1610px;top:344px;" width="18" height="17" viewBox="0 0 18 17"><path d="M4.75 12.3 H1.4 V0.6 H9.3 L12.7 3.6" fill="none" stroke="#555555" stroke-width="1.25"/><path d="M8.6 0.6 V4.2" fill="none" stroke="#555555" stroke-width="1.25"/><ellipse cx="11.5" cy="7.8" rx="2.5" ry="2.7" fill="#2e9a6a"/><path d="M5.9 15.8 Q5.9 10.9 11.4 10.9 Q16.9 10.9 16.9 15.8 Z" fill="#2e9a6a"/></svg><div style="position:absolute;top:347px;font-size:11px;line-height:1;white-space:nowrap;color:#111;font-weight:bold;left:1631px;">Вход с учетной записью выполнен успешно</div><svg style="position:absolute;left:1890px;top:347px;" width="10" height="10" viewBox="0 0 10 10"><circle cx="5" cy="5" r="3.3" fill="#86c440" stroke="#5f9c2c" stroke-width="0.7"/><circle cx="4.3" cy="4.2" r="1.1" fill="#c0e69a"/></svg><div style="position:absolute;left:493px;top:380px;width:1417px;height:1px;background:#d8d8d8"></div><div style="position:absolute;left:521px;top:362px;width:1px;height:18px;background:#d8d8d8"></div><div style="position:absolute;left:550px;top:362px;width:1px;height:18px;background:#d8d8d8"></div><div style="position:absolute;left:690px;top:362px;width:1px;height:18px;background:#d8d8d8"></div><div style="position:absolute;left:831px;top:362px;width:1px;height:18px;background:#d8d8d8"></div><div style="position:absolute;left:939px;top:362px;width:1px;height:18px;background:#d8d8d8"></div><div style="position:absolute;left:1079px;top:362px;width:1px;height:18px;background:#d8d8d8"></div><div style="position:absolute;left:1218px;top:362px;width:1px;height:18px;background:#d8d8d8"></div><div style="position:absolute;left:1358px;top:362px;width:1px;height:18px;background:#d8d8d8"></div><div style="position:absolute;left:1467px;top:362px;width:1px;height:18px;background:#d8d8d8"></div><div style="position:absolute;left:1607px;top:362px;width:1px;height:18px;background:#d8d8d8"></div><div style="position:absolute;left:1881px;top:362px;width:1px;height:18px;background:#d8d8d8"></div><div style="position:absolute;top:366px;font-size:11px;line-height:1;white-space:nowrap;color:#111;font-weight:bold;right:1401px;text-align:right;">3</div><div style="position:absolute;top:366px;font-size:11px;line-height:1;white-space:nowrap;color:#111;font-weight:bold;left:553px;">09.04.2018 1:39:14</div><div style="position:absolute;top:366px;font-size:11px;line-height:1;white-space:nowrap;color:#111;font-weight:bold;left:693px;">09.04.2018 1:29:06</div><div style="position:absolute;top:366px;font-size:11px;line-height:1;white-space:nowrap;color:#111;font-weight:bold;right:982px;text-align:right;">2</div><div style="position:absolute;top:366px;font-size:11px;line-height:1;white-space:nowrap;color:#111;font-weight:bold;left:942px;">LOC\user1403</div><div style="position:absolute;top:366px;font-size:11px;line-height:1;white-space:nowrap;color:#111;font-weight:bold;left:1082px;">user1403</div><div style="position:absolute;top:366px;font-size:11px;line-height:1;white-space:nowrap;color:#111;font-weight:bold;left:1221px;">KVS24</div><div style="position:absolute;top:366px;font-size:11px;line-height:1;white-space:nowrap;color:#111;font-weight:bold;left:1361px;">192.168.171.51</div><svg style="position:absolute;left:1470px;top:363px;" width="18" height="17" viewBox="0 0 18 17"><circle cx="8.4" cy="7.5" r="6.6" fill="none" stroke="#707070" stroke-width="1.3"/><path d="M6.4 1.2 V13.8 M10.4 1.2 V13.8 M2 5 H14.8 M2 9.2 H14.8" stroke="#707070" stroke-width="1.2"/><path d="M9.5 16 V10.5 Q9.5 7.5 12 6.5 H17 V16 Z" fill="#fff"/><ellipse cx="13.7" cy="9.3" rx="2.4" ry="2.2" fill="#2f6fc0"/><path d="M10.2 15.8 Q10.2 12 13.4 12 Q16.6 12 16.6 15.8 Z" fill="#2f6fc0"/></svg><div style="position:absolute;top:366px;font-size:11px;line-height:1;white-space:nowrap;color:#111;font-weight:bold;left:1491px;">Сетевой</div><svg style="position:absolute;left:1610px;top:363px;" width="18" height="17" viewBox="0 0 18 17"><path d="M4.75 12.3 H1.4 V0.6 H9.3 L12.7 3.6" fill="none" stroke="#555555" stroke-width="1.25"/><path d="M8.6 0.6 V4.2" fill="none" stroke="#555555" stroke-width="1.25"/><ellipse cx="11.5" cy="7.8" rx="2.5" ry="2.7" fill="#2e9a6a"/><path d="M5.9 15.8 Q5.9 10.9 11.4 10.9 Q16.9 10.9 16.9 15.8 Z" fill="#2e9a6a"/></svg><div style="position:absolute;top:366px;font-size:11px;line-height:1;white-space:nowrap;color:#111;font-weight:bold;left:1631px;">Вход с учетной записью выполнен успешно</div><svg style="position:absolute;left:1890px;top:366px;" width="10" height="10" viewBox="0 0 10 10"><circle cx="5" cy="5" r="3.3" fill="#86c440" stroke="#5f9c2c" stroke-width="0.7"/><circle cx="4.3" cy="4.2" r="1.1" fill="#c0e69a"/></svg><div style="position:absolute;left:493px;top:399px;width:1417px;height:1px;background:#d8d8d8"></div><div style="position:absolute;left:521px;top:381px;width:1px;height:18px;background:#d8d8d8"></div><div style="position:absolute;left:550px;top:381px;width:1px;height:18px;background:#d8d8d8"></div><div style="position:absolute;left:690px;top:381px;width:1px;height:18px;background:#d8d8d8"></div><div style="position:absolute;left:831px;top:381px;width:1px;height:18px;background:#d8d8d8"></div><div style="position:absolute;left:939px;top:381px;width:1px;height:18px;background:#d8d8d8"></div><div style="position:absolute;left:1079px;top:381px;width:1px;height:18px;background:#d8d8d8"></div><div style="position:absolute;left:1218px;top:381px;width:1px;height:18px;background:#d8d8d8"></div><div style="position:absolute;left:1358px;top:381px;width:1px;height:18px;background:#d8d8d8"></div><div style="position:absolute;left:1467px;top:381px;width:1px;height:18px;background:#d8d8d8"></div><div style="position:absolute;left:1607px;top:381px;width:1px;height:18px;background:#d8d8d8"></div><div style="position:absolute;left:1881px;top:381px;width:1px;height:18px;background:#d8d8d8"></div><div style="position:absolute;top:385px;font-size:11px;line-height:1;white-space:nowrap;color:#111;font-weight:bold;right:1401px;text-align:right;">4</div><div style="position:absolute;top:385px;font-size:11px;line-height:1;white-space:nowrap;color:#111;font-weight:bold;left:553px;">09.04.2018 3:10:37</div><div style="position:absolute;top:385px;font-size:11px;line-height:1;white-space:nowrap;color:#111;font-weight:bold;left:693px;">09.04.2018 3:00:06</div><div style="position:absolute;top:385px;font-size:11px;line-height:1;white-space:nowrap;color:#111;font-weight:bold;right:982px;text-align:right;">2</div><div style="position:absolute;top:385px;font-size:11px;line-height:1;white-space:nowrap;color:#111;font-weight:bold;left:942px;">LOC\user1403</div><div style="position:absolute;top:385px;font-size:11px;line-height:1;white-space:nowrap;color:#111;font-weight:bold;left:1082px;">user1403</div><div style="position:absolute;top:385px;font-size:11px;line-height:1;white-space:nowrap;color:#111;font-weight:bold;left:1221px;">KVS24</div><div style="position:absolute;top:385px;font-size:11px;line-height:1;white-space:nowrap;color:#111;font-weight:bold;left:1361px;">192.168.171.51</div><svg style="position:absolute;left:1470px;top:382px;" width="18" height="17" viewBox="0 0 18 17"><circle cx="8.4" cy="7.5" r="6.6" fill="none" stroke="#707070" stroke-width="1.3"/><path d="M6.4 1.2 V13.8 M10.4 1.2 V13.8 M2 5 H14.8 M2 9.2 H14.8" stroke="#707070" stroke-width="1.2"/><path d="M9.5 16 V10.5 Q9.5 7.5 12 6.5 H17 V16 Z" fill="#fff"/><ellipse cx="13.7" cy="9.3" rx="2.4" ry="2.2" fill="#2f6fc0"/><path d="M10.2 15.8 Q10.2 12 13.4 12 Q16.6 12 16.6 15.8 Z" fill="#2f6fc0"/></svg><div style="position:absolute;top:385px;font-size:11px;line-height:1;white-space:nowrap;color:#111;font-weight:bold;left:1491px;">Сетевой</div><svg style="position:absolute;left:1610px;top:382px;" width="18" height="17" viewBox="0 0 18 17"><path d="M4.75 12.3 H1.4 V0.6 H9.3 L12.7 3.6" fill="none" stroke="#555555" stroke-width="1.25"/><path d="M8.6 0.6 V4.2" fill="none" stroke="#555555" stroke-width="1.25"/><ellipse cx="11.5" cy="7.8" rx="2.5" ry="2.7" fill="#2e9a6a"/><path d="M5.9 15.8 Q5.9 10.9 11.4 10.9 Q16.9 10.9 16.9 15.8 Z" fill="#2e9a6a"/></svg><div style="position:absolute;top:385px;font-size:11px;line-height:1;white-space:nowrap;color:#111;font-weight:bold;left:1631px;">Вход с учетной записью выполнен успешно</div><svg style="position:absolute;left:1890px;top:385px;" width="10" height="10" viewBox="0 0 10 10"><circle cx="5" cy="5" r="3.3" fill="#86c440" stroke="#5f9c2c" stroke-width="0.7"/><circle cx="4.3" cy="4.2" r="1.1" fill="#c0e69a"/></svg><div style="position:absolute;left:493px;top:418px;width:1417px;height:1px;background:#d8d8d8"></div><div style="position:absolute;left:521px;top:400px;width:1px;height:18px;background:#d8d8d8"></div><div style="position:absolute;left:550px;top:400px;width:1px;height:18px;background:#d8d8d8"></div><div style="position:absolute;left:690px;top:400px;width:1px;height:18px;background:#d8d8d8"></div><div style="position:absolute;left:831px;top:400px;width:1px;height:18px;background:#d8d8d8"></div><div style="position:absolute;left:939px;top:400px;width:1px;height:18px;background:#d8d8d8"></div><div style="position:absolute;left:1079px;top:400px;width:1px;height:18px;background:#d8d8d8"></div><div style="position:absolute;left:1218px;top:400px;width:1px;height:18px;background:#d8d8d8"></div><div style="position:absolute;left:1358px;top:400px;width:1px;height:18px;background:#d8d8d8"></div><div style="position:absolute;left:1467px;top:400px;width:1px;height:18px;background:#d8d8d8"></div><div style="position:absolute;left:1607px;top:400px;width:1px;height:18px;background:#d8d8d8"></div><div style="position:absolute;left:1881px;top:400px;width:1px;height:18px;background:#d8d8d8"></div><div style="position:absolute;top:404px;font-size:11px;line-height:1;white-space:nowrap;color:#111;font-weight:bold;right:1401px;text-align:right;">5</div><div style="position:absolute;top:404px;font-size:11px;line-height:1;white-space:nowrap;color:#111;font-weight:bold;left:553px;">09.04.2018 4:46:32</div><div style="position:absolute;top:404px;font-size:11px;line-height:1;white-space:nowrap;color:#111;font-weight:bold;left:693px;">09.04.2018 4:36:06</div><div style="position:absolute;top:404px;font-size:11px;line-height:1;white-space:nowrap;color:#111;font-weight:bold;right:982px;text-align:right;">2</div><div style="position:absolute;top:404px;font-size:11px;line-height:1;white-space:nowrap;color:#111;font-weight:bold;left:942px;">LOC\user1403</div><div style="position:absolute;top:404px;font-size:11px;line-height:1;white-space:nowrap;color:#111;font-weight:bold;left:1082px;">user1403</div><div style="position:absolute;top:404px;font-size:11px;line-height:1;white-space:nowrap;color:#111;font-weight:bold;left:1221px;">KVS24</div><div style="position:absolute;top:404px;font-size:11px;line-height:1;white-space:nowrap;color:#111;font-weight:bold;left:1361px;">192.168.171.51</div><svg style="position:absolute;left:1470px;top:401px;" width="18" height="17" viewBox="0 0 18 17"><circle cx="8.4" cy="7.5" r="6.6" fill="none" stroke="#707070" stroke-width="1.3"/><path d="M6.4 1.2 V13.8 M10.4 1.2 V13.8 M2 5 H14.8 M2 9.2 H14.8" stroke="#707070" stroke-width="1.2"/><path d="M9.5 16 V10.5 Q9.5 7.5 12 6.5 H17 V16 Z" fill="#fff"/><ellipse cx="13.7" cy="9.3" rx="2.4" ry="2.2" fill="#2f6fc0"/><path d="M10.2 15.8 Q10.2 12 13.4 12 Q16.6 12 16.6 15.8 Z" fill="#2f6fc0"/></svg><div style="position:absolute;top:404px;font-size:11px;line-height:1;white-space:nowrap;color:#111;font-weight:bold;left:1491px;">Сетевой</div><svg style="position:absolute;left:1610px;top:401px;" width="18" height="17" viewBox="0 0 18 17"><path d="M4.75 12.3 H1.4 V0.6 H9.3 L12.7 3.6" fill="none" stroke="#555555" stroke-width="1.25"/><path d="M8.6 0.6 V4.2" fill="none" stroke="#555555" stroke-width="1.25"/><ellipse cx="11.5" cy="7.8" rx="2.5" ry="2.7" fill="#2e9a6a"/><path d="M5.9 15.8 Q5.9 10.9 11.4 10.9 Q16.9 10.9 16.9 15.8 Z" fill="#2e9a6a"/></svg><div style="position:absolute;top:404px;font-size:11px;line-height:1;white-space:nowrap;color:#111;font-weight:bold;left:1631px;">Вход с учетной записью выполнен успешно</div><svg style="position:absolute;left:1890px;top:404px;" width="10" height="10" viewBox="0 0 10 10"><circle cx="5" cy="5" r="3.3" fill="#86c440" stroke="#5f9c2c" stroke-width="0.7"/><circle cx="4.3" cy="4.2" r="1.1" fill="#c0e69a"/></svg><div style="position:absolute;left:493px;top:437px;width:1417px;height:1px;background:#d8d8d8"></div><div style="position:absolute;left:521px;top:419px;width:1px;height:18px;background:#d8d8d8"></div><div style="position:absolute;left:550px;top:419px;width:1px;height:18px;background:#d8d8d8"></div><div style="position:absolute;left:690px;top:419px;width:1px;height:18px;background:#d8d8d8"></div><div style="position:absolute;left:831px;top:419px;width:1px;height:18px;background:#d8d8d8"></div><div style="position:absolute;left:939px;top:419px;width:1px;height:18px;background:#d8d8d8"></div><div style="position:absolute;left:1079px;top:419px;width:1px;height:18px;background:#d8d8d8"></div><div style="position:absolute;left:1218px;top:419px;width:1px;height:18px;background:#d8d8d8"></div><div style="position:absolute;left:1358px;top:419px;width:1px;height:18px;background:#d8d8d8"></div><div style="position:absolute;left:1467px;top:419px;width:1px;height:18px;background:#d8d8d8"></div><div style="position:absolute;left:1607px;top:419px;width:1px;height:18px;background:#d8d8d8"></div><div style="position:absolute;left:1881px;top:419px;width:1px;height:18px;background:#d8d8d8"></div><div style="position:absolute;top:423px;font-size:11px;line-height:1;white-space:nowrap;color:#111;font-weight:bold;right:1401px;text-align:right;">6</div><div style="position:absolute;top:423px;font-size:11px;line-height:1;white-space:nowrap;color:#111;font-weight:bold;left:553px;">09.04.2018 5:25:12</div><div style="position:absolute;top:423px;font-size:11px;line-height:1;white-space:nowrap;color:#111;font-weight:bold;left:693px;">09.04.2018 5:14:39</div><div style="position:absolute;top:423px;font-size:11px;line-height:1;white-space:nowrap;color:#111;font-weight:bold;right:982px;text-align:right;">1</div><div style="position:absolute;top:423px;font-size:11px;line-height:1;white-space:nowrap;color:#111;font-weight:bold;left:942px;">LOC\user1403</div><div style="position:absolute;top:423px;font-size:11px;line-height:1;white-space:nowrap;color:#111;font-weight:bold;left:1082px;">user1403</div><div style="position:absolute;top:423px;font-size:11px;line-height:1;white-space:nowrap;color:#111;font-weight:bold;left:1221px;">KVS24</div><div style="position:absolute;top:423px;font-size:11px;line-height:1;white-space:nowrap;color:#111;font-weight:bold;left:1361px;">192.168.171.51</div><svg style="position:absolute;left:1470px;top:420px;" width="18" height="17" viewBox="0 0 18 17"><circle cx="8.4" cy="7.5" r="6.6" fill="none" stroke="#707070" stroke-width="1.3"/><path d="M6.4 1.2 V13.8 M10.4 1.2 V13.8 M2 5 H14.8 M2 9.2 H14.8" stroke="#707070" stroke-width="1.2"/><path d="M9.5 16 V10.5 Q9.5 7.5 12 6.5 H17 V16 Z" fill="#fff"/><ellipse cx="13.7" cy="9.3" rx="2.4" ry="2.2" fill="#2f6fc0"/><path d="M10.2 15.8 Q10.2 12 13.4 12 Q16.6 12 16.6 15.8 Z" fill="#2f6fc0"/></svg><div style="position:absolute;top:423px;font-size:11px;line-height:1;white-space:nowrap;color:#111;font-weight:bold;left:1491px;">Сетевой</div><svg style="position:absolute;left:1610px;top:420px;" width="18" height="17" viewBox="0 0 18 17"><path d="M4.75 12.3 H1.4 V0.6 H9.3 L12.7 3.6" fill="none" stroke="#555555" stroke-width="1.25"/><path d="M8.6 0.6 V4.2" fill="none" stroke="#555555" stroke-width="1.25"/><ellipse cx="11.5" cy="7.8" rx="2.5" ry="2.7" fill="#2e9a6a"/><path d="M5.9 15.8 Q5.9 10.9 11.4 10.9 Q16.9 10.9 16.9 15.8 Z" fill="#2e9a6a"/></svg><div style="position:absolute;top:423px;font-size:11px;line-height:1;white-space:nowrap;color:#111;font-weight:bold;left:1631px;">Вход с учетной записью выполнен успешно</div><svg style="position:absolute;left:1890px;top:423px;" width="10" height="10" viewBox="0 0 10 10"><circle cx="5" cy="5" r="3.3" fill="#86c440" stroke="#5f9c2c" stroke-width="0.7"/><circle cx="4.3" cy="4.2" r="1.1" fill="#c0e69a"/></svg><div style="position:absolute;left:493px;top:456px;width:1417px;height:1px;background:#d8d8d8"></div><div style="position:absolute;left:521px;top:438px;width:1px;height:18px;background:#d8d8d8"></div><div style="position:absolute;left:550px;top:438px;width:1px;height:18px;background:#d8d8d8"></div><div style="position:absolute;left:690px;top:438px;width:1px;height:18px;background:#d8d8d8"></div><div style="position:absolute;left:831px;top:438px;width:1px;height:18px;background:#d8d8d8"></div><div style="position:absolute;left:939px;top:438px;width:1px;height:18px;background:#d8d8d8"></div><div style="position:absolute;left:1079px;top:438px;width:1px;height:18px;background:#d8d8d8"></div><div style="position:absolute;left:1218px;top:438px;width:1px;height:18px;background:#d8d8d8"></div><div style="position:absolute;left:1358px;top:438px;width:1px;height:18px;background:#d8d8d8"></div><div style="position:absolute;left:1467px;top:438px;width:1px;height:18px;background:#d8d8d8"></div><div style="position:absolute;left:1607px;top:438px;width:1px;height:18px;background:#d8d8d8"></div><div style="position:absolute;left:1881px;top:438px;width:1px;height:18px;background:#d8d8d8"></div><div style="position:absolute;top:442px;font-size:11px;line-height:1;white-space:nowrap;color:#111;font-weight:bold;right:1401px;text-align:right;">7</div><div style="position:absolute;top:442px;font-size:11px;line-height:1;white-space:nowrap;color:#111;font-weight:bold;left:553px;">09.04.2018 6:16:24</div><div style="position:absolute;top:442px;font-size:11px;line-height:1;white-space:nowrap;color:#111;font-weight:bold;left:693px;">09.04.2018 6:06:07</div><div style="position:absolute;top:442px;font-size:11px;line-height:1;white-space:nowrap;color:#111;font-weight:bold;right:982px;text-align:right;">2</div><div style="position:absolute;top:442px;font-size:11px;line-height:1;white-space:nowrap;color:#111;font-weight:bold;left:942px;">LOC\user1403</div><div style="position:absolute;top:442px;font-size:11px;line-height:1;white-space:nowrap;color:#111;font-weight:bold;left:1082px;">user1403</div><div style="position:absolute;top:442px;font-size:11px;line-height:1;white-space:nowrap;color:#111;font-weight:bold;left:1221px;">KVS24</div><div style="position:absolute;top:442px;font-size:11px;line-height:1;white-space:nowrap;color:#111;font-weight:bold;left:1361px;">192.168.171.51</div><svg style="position:absolute;left:1470px;top:439px;" width="18" height="17" viewBox="0 0 18 17"><circle cx="8.4" cy="7.5" r="6.6" fill="none" stroke="#707070" stroke-width="1.3"/><path d="M6.4 1.2 V13.8 M10.4 1.2 V13.8 M2 5 H14.8 M2 9.2 H14.8" stroke="#707070" stroke-width="1.2"/><path d="M9.5 16 V10.5 Q9.5 7.5 12 6.5 H17 V16 Z" fill="#fff"/><ellipse cx="13.7" cy="9.3" rx="2.4" ry="2.2" fill="#2f6fc0"/><path d="M10.2 15.8 Q10.2 12 13.4 12 Q16.6 12 16.6 15.8 Z" fill="#2f6fc0"/></svg><div style="position:absolute;top:442px;font-size:11px;line-height:1;white-space:nowrap;color:#111;font-weight:bold;left:1491px;">Сетевой</div><svg style="position:absolute;left:1610px;top:439px;" width="18" height="17" viewBox="0 0 18 17"><path d="M4.75 12.3 H1.4 V0.6 H9.3 L12.7 3.6" fill="none" stroke="#555555" stroke-width="1.25"/><path d="M8.6 0.6 V4.2" fill="none" stroke="#555555" stroke-width="1.25"/><ellipse cx="11.5" cy="7.8" rx="2.5" ry="2.7" fill="#2e9a6a"/><path d="M5.9 15.8 Q5.9 10.9 11.4 10.9 Q16.9 10.9 16.9 15.8 Z" fill="#2e9a6a"/></svg><div style="position:absolute;top:442px;font-size:11px;line-height:1;white-space:nowrap;color:#111;font-weight:bold;left:1631px;">Вход с учетной записью выполнен успешно</div><svg style="position:absolute;left:1890px;top:442px;" width="10" height="10" viewBox="0 0 10 10"><circle cx="5" cy="5" r="3.3" fill="#86c440" stroke="#5f9c2c" stroke-width="0.7"/><circle cx="4.3" cy="4.2" r="1.1" fill="#c0e69a"/></svg><div style="position:absolute;left:493px;top:475px;width:1417px;height:1px;background:#d8d8d8"></div><div style="position:absolute;left:521px;top:457px;width:1px;height:18px;background:#d8d8d8"></div><div style="position:absolute;left:550px;top:457px;width:1px;height:18px;background:#d8d8d8"></div><div style="position:absolute;left:690px;top:457px;width:1px;height:18px;background:#d8d8d8"></div><div style="position:absolute;left:831px;top:457px;width:1px;height:18px;background:#d8d8d8"></div><div style="position:absolute;left:939px;top:457px;width:1px;height:18px;background:#d8d8d8"></div><div style="position:absolute;left:1079px;top:457px;width:1px;height:18px;background:#d8d8d8"></div><div style="position:absolute;left:1218px;top:457px;width:1px;height:18px;background:#d8d8d8"></div><div style="position:absolute;left:1358px;top:457px;width:1px;height:18px;background:#d8d8d8"></div><div style="position:absolute;left:1467px;top:457px;width:1px;height:18px;background:#d8d8d8"></div><div style="position:absolute;left:1607px;top:457px;width:1px;height:18px;background:#d8d8d8"></div><div style="position:absolute;left:1881px;top:457px;width:1px;height:18px;background:#d8d8d8"></div><div style="position:absolute;top:461px;font-size:11px;line-height:1;white-space:nowrap;color:#111;font-weight:bold;right:1401px;text-align:right;">8</div><div style="position:absolute;top:461px;font-size:11px;line-height:1;white-space:nowrap;color:#111;font-weight:bold;left:553px;">09.04.2018 7:52:19</div><div style="position:absolute;top:461px;font-size:11px;line-height:1;white-space:nowrap;color:#111;font-weight:bold;left:693px;">09.04.2018 7:42:07</div><div style="position:absolute;top:461px;font-size:11px;line-height:1;white-space:nowrap;color:#111;font-weight:bold;right:982px;text-align:right;">2</div><div style="position:absolute;top:461px;font-size:11px;line-height:1;white-space:nowrap;color:#111;font-weight:bold;left:942px;">LOC\user1403</div><div style="position:absolute;top:461px;font-size:11px;line-height:1;white-space:nowrap;color:#111;font-weight:bold;left:1082px;">user1403</div><div style="position:absolute;top:461px;font-size:11px;line-height:1;white-space:nowrap;color:#111;font-weight:bold;left:1221px;">KVS24</div><div style="position:absolute;top:461px;font-size:11px;line-height:1;white-space:nowrap;color:#111;font-weight:bold;left:1361px;">192.168.171.51</div><svg style="position:absolute;left:1470px;top:458px;" width="18" height="17" viewBox="0 0 18 17"><circle cx="8.4" cy="7.5" r="6.6" fill="none" stroke="#707070" stroke-width="1.3"/><path d="M6.4 1.2 V13.8 M10.4 1.2 V13.8 M2 5 H14.8 M2 9.2 H14.8" stroke="#707070" stroke-width="1.2"/><path d="M9.5 16 V10.5 Q9.5 7.5 12 6.5 H17 V16 Z" fill="#fff"/><ellipse cx="13.7" cy="9.3" rx="2.4" ry="2.2" fill="#2f6fc0"/><path d="M10.2 15.8 Q10.2 12 13.4 12 Q16.6 12 16.6 15.8 Z" fill="#2f6fc0"/></svg><div style="position:absolute;top:461px;font-size:11px;line-height:1;white-space:nowrap;color:#111;font-weight:bold;left:1491px;">Сетевой</div><svg style="position:absolute;left:1610px;top:458px;" width="18" height="17" viewBox="0 0 18 17"><path d="M4.75 12.3 H1.4 V0.6 H9.3 L12.7 3.6" fill="none" stroke="#555555" stroke-width="1.25"/><path d="M8.6 0.6 V4.2" fill="none" stroke="#555555" stroke-width="1.25"/><ellipse cx="11.5" cy="7.8" rx="2.5" ry="2.7" fill="#2e9a6a"/><path d="M5.9 15.8 Q5.9 10.9 11.4 10.9 Q16.9 10.9 16.9 15.8 Z" fill="#2e9a6a"/></svg><div style="position:absolute;top:461px;font-size:11px;line-height:1;white-space:nowrap;color:#111;font-weight:bold;left:1631px;">Вход с учетной записью выполнен успешно</div><svg style="position:absolute;left:1890px;top:461px;" width="10" height="10" viewBox="0 0 10 10"><circle cx="5" cy="5" r="3.3" fill="#86c440" stroke="#5f9c2c" stroke-width="0.7"/><circle cx="4.3" cy="4.2" r="1.1" fill="#c0e69a"/></svg><div style="position:absolute;left:493px;top:494px;width:1417px;height:1px;background:#d8d8d8"></div><div style="position:absolute;left:521px;top:476px;width:1px;height:18px;background:#d8d8d8"></div><div style="position:absolute;left:550px;top:476px;width:1px;height:18px;background:#d8d8d8"></div><div style="position:absolute;left:690px;top:476px;width:1px;height:18px;background:#d8d8d8"></div><div style="position:absolute;left:831px;top:476px;width:1px;height:18px;background:#d8d8d8"></div><div style="position:absolute;left:939px;top:476px;width:1px;height:18px;background:#d8d8d8"></div><div style="position:absolute;left:1079px;top:476px;width:1px;height:18px;background:#d8d8d8"></div><div style="position:absolute;left:1218px;top:476px;width:1px;height:18px;background:#d8d8d8"></div><div style="position:absolute;left:1358px;top:476px;width:1px;height:18px;background:#d8d8d8"></div><div style="position:absolute;left:1467px;top:476px;width:1px;height:18px;background:#d8d8d8"></div><div style="position:absolute;left:1607px;top:476px;width:1px;height:18px;background:#d8d8d8"></div><div style="position:absolute;left:1881px;top:476px;width:1px;height:18px;background:#d8d8d8"></div><div style="position:absolute;top:480px;font-size:11px;line-height:1;white-space:nowrap;color:#111;font-weight:bold;right:1401px;text-align:right;">9</div><div style="position:absolute;top:480px;font-size:11px;line-height:1;white-space:nowrap;color:#111;font-weight:bold;left:553px;">09.04.2018 9:24:44</div><div style="position:absolute;top:480px;font-size:11px;line-height:1;white-space:nowrap;color:#111;font-weight:bold;left:693px;">09.04.2018 9:14:39</div><div style="position:absolute;top:480px;font-size:11px;line-height:1;white-space:nowrap;color:#111;font-weight:bold;right:982px;text-align:right;">1</div><div style="position:absolute;top:480px;font-size:11px;line-height:1;white-space:nowrap;color:#111;font-weight:bold;left:942px;">LOC\user1403</div><div style="position:absolute;top:480px;font-size:11px;line-height:1;white-space:nowrap;color:#111;font-weight:bold;left:1082px;">user1403</div><div style="position:absolute;top:480px;font-size:11px;line-height:1;white-space:nowrap;color:#111;font-weight:bold;left:1221px;">KVS24</div><div style="position:absolute;top:480px;font-size:11px;line-height:1;white-space:nowrap;color:#111;font-weight:bold;left:1361px;">192.168.171.51</div><svg style="position:absolute;left:1470px;top:477px;" width="18" height="17" viewBox="0 0 18 17"><circle cx="8.4" cy="7.5" r="6.6" fill="none" stroke="#707070" stroke-width="1.3"/><path d="M6.4 1.2 V13.8 M10.4 1.2 V13.8 M2 5 H14.8 M2 9.2 H14.8" stroke="#707070" stroke-width="1.2"/><path d="M9.5 16 V10.5 Q9.5 7.5 12 6.5 H17 V16 Z" fill="#fff"/><ellipse cx="13.7" cy="9.3" rx="2.4" ry="2.2" fill="#2f6fc0"/><path d="M10.2 15.8 Q10.2 12 13.4 12 Q16.6 12 16.6 15.8 Z" fill="#2f6fc0"/></svg><div style="position:absolute;top:480px;font-size:11px;line-height:1;white-space:nowrap;color:#111;font-weight:bold;left:1491px;">Сетевой</div><svg style="position:absolute;left:1610px;top:477px;" width="18" height="17" viewBox="0 0 18 17"><path d="M4.75 12.3 H1.4 V0.6 H9.3 L12.7 3.6" fill="none" stroke="#555555" stroke-width="1.25"/><path d="M8.6 0.6 V4.2" fill="none" stroke="#555555" stroke-width="1.25"/><ellipse cx="11.5" cy="7.8" rx="2.5" ry="2.7" fill="#2e9a6a"/><path d="M5.9 15.8 Q5.9 10.9 11.4 10.9 Q16.9 10.9 16.9 15.8 Z" fill="#2e9a6a"/></svg><div style="position:absolute;top:480px;font-size:11px;line-height:1;white-space:nowrap;color:#111;font-weight:bold;left:1631px;">Вход с учетной записью выполнен успешно</div><svg style="position:absolute;left:1890px;top:480px;" width="10" height="10" viewBox="0 0 10 10"><circle cx="5" cy="5" r="3.3" fill="#86c440" stroke="#5f9c2c" stroke-width="0.7"/><circle cx="4.3" cy="4.2" r="1.1" fill="#c0e69a"/></svg><div style="position:absolute;left:493px;top:513px;width:1417px;height:1px;background:#d8d8d8"></div><div style="position:absolute;left:521px;top:495px;width:1px;height:18px;background:#d8d8d8"></div><div style="position:absolute;left:550px;top:495px;width:1px;height:18px;background:#d8d8d8"></div><div style="position:absolute;left:690px;top:495px;width:1px;height:18px;background:#d8d8d8"></div><div style="position:absolute;left:831px;top:495px;width:1px;height:18px;background:#d8d8d8"></div><div style="position:absolute;left:939px;top:495px;width:1px;height:18px;background:#d8d8d8"></div><div style="position:absolute;left:1079px;top:495px;width:1px;height:18px;background:#d8d8d8"></div><div style="position:absolute;left:1218px;top:495px;width:1px;height:18px;background:#d8d8d8"></div><div style="position:absolute;left:1358px;top:495px;width:1px;height:18px;background:#d8d8d8"></div><div style="position:absolute;left:1467px;top:495px;width:1px;height:18px;background:#d8d8d8"></div><div style="position:absolute;left:1607px;top:495px;width:1px;height:18px;background:#d8d8d8"></div><div style="position:absolute;left:1881px;top:495px;width:1px;height:18px;background:#d8d8d8"></div><div style="position:absolute;top:499px;font-size:11px;line-height:1;white-space:nowrap;color:#111;font-weight:bold;right:1401px;text-align:right;">10</div><div style="position:absolute;top:499px;font-size:11px;line-height:1;white-space:nowrap;color:#111;font-weight:bold;left:553px;">09.04.2018 9:35:47</div><div style="position:absolute;top:499px;font-size:11px;line-height:1;white-space:nowrap;color:#111;font-weight:bold;left:693px;">09.04.2018 9:25:07</div><div style="position:absolute;top:499px;font-size:11px;line-height:1;white-space:nowrap;color:#111;font-weight:bold;right:982px;text-align:right;">2</div><div style="position:absolute;top:499px;font-size:11px;line-height:1;white-space:nowrap;color:#111;font-weight:bold;left:942px;">LOC\user1403</div><div style="position:absolute;top:499px;font-size:11px;line-height:1;white-space:nowrap;color:#111;font-weight:bold;left:1082px;">user1403</div><div style="position:absolute;top:499px;font-size:11px;line-height:1;white-space:nowrap;color:#111;font-weight:bold;left:1221px;">KVS24</div><div style="position:absolute;top:499px;font-size:11px;line-height:1;white-space:nowrap;color:#111;font-weight:bold;left:1361px;">192.168.171.51</div><svg style="position:absolute;left:1470px;top:496px;" width="18" height="17" viewBox="0 0 18 17"><circle cx="8.4" cy="7.5" r="6.6" fill="none" stroke="#707070" stroke-width="1.3"/><path d="M6.4 1.2 V13.8 M10.4 1.2 V13.8 M2 5 H14.8 M2 9.2 H14.8" stroke="#707070" stroke-width="1.2"/><path d="M9.5 16 V10.5 Q9.5 7.5 12 6.5 H17 V16 Z" fill="#fff"/><ellipse cx="13.7" cy="9.3" rx="2.4" ry="2.2" fill="#2f6fc0"/><path d="M10.2 15.8 Q10.2 12 13.4 12 Q16.6 12 16.6 15.8 Z" fill="#2f6fc0"/></svg><div style="position:absolute;top:499px;font-size:11px;line-height:1;white-space:nowrap;color:#111;font-weight:bold;left:1491px;">Сетевой</div><svg style="position:absolute;left:1610px;top:496px;" width="18" height="17" viewBox="0 0 18 17"><path d="M4.75 12.3 H1.4 V0.6 H9.3 L12.7 3.6" fill="none" stroke="#555555" stroke-width="1.25"/><path d="M8.6 0.6 V4.2" fill="none" stroke="#555555" stroke-width="1.25"/><ellipse cx="11.5" cy="7.8" rx="2.5" ry="2.7" fill="#2e9a6a"/><path d="M5.9 15.8 Q5.9 10.9 11.4 10.9 Q16.9 10.9 16.9 15.8 Z" fill="#2e9a6a"/></svg><div style="position:absolute;top:499px;font-size:11px;line-height:1;white-space:nowrap;color:#111;font-weight:bold;left:1631px;">Вход с учетной записью выполнен успешно</div><svg style="position:absolute;left:1890px;top:499px;" width="10" height="10" viewBox="0 0 10 10"><circle cx="5" cy="5" r="3.3" fill="#86c440" stroke="#5f9c2c" stroke-width="0.7"/><circle cx="4.3" cy="4.2" r="1.1" fill="#c0e69a"/></svg><div style="position:absolute;left:493px;top:532px;width:1417px;height:1px;background:#d8d8d8"></div><div style="position:absolute;left:521px;top:514px;width:1px;height:18px;background:#d8d8d8"></div><div style="position:absolute;left:550px;top:514px;width:1px;height:18px;background:#d8d8d8"></div><div style="position:absolute;left:690px;top:514px;width:1px;height:18px;background:#d8d8d8"></div><div style="position:absolute;left:831px;top:514px;width:1px;height:18px;background:#d8d8d8"></div><div style="position:absolute;left:939px;top:514px;width:1px;height:18px;background:#d8d8d8"></div><div style="position:absolute;left:1079px;top:514px;width:1px;height:18px;background:#d8d8d8"></div><div style="position:absolute;left:1218px;top:514px;width:1px;height:18px;background:#d8d8d8"></div><div style="position:absolute;left:1358px;top:514px;width:1px;height:18px;background:#d8d8d8"></div><div style="position:absolute;left:1467px;top:514px;width:1px;height:18px;background:#d8d8d8"></div><div style="position:absolute;left:1607px;top:514px;width:1px;height:18px;background:#d8d8d8"></div><div style="position:absolute;left:1881px;top:514px;width:1px;height:18px;background:#d8d8d8"></div><div style="position:absolute;top:518px;font-size:11px;line-height:1;white-space:nowrap;color:#111;font-weight:bold;right:1401px;text-align:right;">11</div><div style="position:absolute;top:518px;font-size:11px;line-height:1;white-space:nowrap;color:#111;font-weight:bold;left:553px;">09.04.2018 10:15:57</div><div style="position:absolute;top:518px;font-size:11px;line-height:1;white-space:nowrap;color:#111;font-weight:bold;left:693px;">09.04.2018 10:05:39</div><div style="position:absolute;top:518px;font-size:11px;line-height:1;white-space:nowrap;color:#111;font-weight:bold;right:982px;text-align:right;">1</div><div style="position:absolute;top:518px;font-size:11px;line-height:1;white-space:nowrap;color:#111;font-weight:bold;left:942px;">LOC\user1403</div><div style="position:absolute;top:518px;font-size:11px;line-height:1;white-space:nowrap;color:#111;font-weight:bold;left:1082px;">user1403</div><div style="position:absolute;top:518px;font-size:11px;line-height:1;white-space:nowrap;color:#111;font-weight:bold;left:1221px;">KVS24</div><div style="position:absolute;top:518px;font-size:11px;line-height:1;white-space:nowrap;color:#111;font-weight:bold;left:1361px;">192.168.171.51</div><svg style="position:absolute;left:1470px;top:515px;" width="18" height="17" viewBox="0 0 18 17"><circle cx="8.4" cy="7.5" r="6.6" fill="none" stroke="#707070" stroke-width="1.3"/><path d="M6.4 1.2 V13.8 M10.4 1.2 V13.8 M2 5 H14.8 M2 9.2 H14.8" stroke="#707070" stroke-width="1.2"/><path d="M9.5 16 V10.5 Q9.5 7.5 12 6.5 H17 V16 Z" fill="#fff"/><ellipse cx="13.7" cy="9.3" rx="2.4" ry="2.2" fill="#2f6fc0"/><path d="M10.2 15.8 Q10.2 12 13.4 12 Q16.6 12 16.6 15.8 Z" fill="#2f6fc0"/></svg><div style="position:absolute;top:518px;font-size:11px;line-height:1;white-space:nowrap;color:#111;font-weight:bold;left:1491px;">Сетевой</div><svg style="position:absolute;left:1610px;top:515px;" width="18" height="17" viewBox="0 0 18 17"><path d="M4.75 12.3 H1.4 V0.6 H9.3 L12.7 3.6" fill="none" stroke="#555555" stroke-width="1.25"/><path d="M8.6 0.6 V4.2" fill="none" stroke="#555555" stroke-width="1.25"/><ellipse cx="11.5" cy="7.8" rx="2.5" ry="2.7" fill="#2e9a6a"/><path d="M5.9 15.8 Q5.9 10.9 11.4 10.9 Q16.9 10.9 16.9 15.8 Z" fill="#2e9a6a"/></svg><div style="position:absolute;top:518px;font-size:11px;line-height:1;white-space:nowrap;color:#111;font-weight:bold;left:1631px;">Вход с учетной записью выполнен успешно</div><svg style="position:absolute;left:1890px;top:518px;" width="10" height="10" viewBox="0 0 10 10"><circle cx="5" cy="5" r="3.3" fill="#86c440" stroke="#5f9c2c" stroke-width="0.7"/><circle cx="4.3" cy="4.2" r="1.1" fill="#c0e69a"/></svg><div style="position:absolute;left:493px;top:551px;width:1417px;height:1px;background:#d8d8d8"></div><div style="position:absolute;left:521px;top:533px;width:1px;height:18px;background:#d8d8d8"></div><div style="position:absolute;left:550px;top:533px;width:1px;height:18px;background:#d8d8d8"></div><div style="position:absolute;left:690px;top:533px;width:1px;height:18px;background:#d8d8d8"></div><div style="position:absolute;left:831px;top:533px;width:1px;height:18px;background:#d8d8d8"></div><div style="position:absolute;left:939px;top:533px;width:1px;height:18px;background:#d8d8d8"></div><div style="position:absolute;left:1079px;top:533px;width:1px;height:18px;background:#d8d8d8"></div><div style="position:absolute;left:1218px;top:533px;width:1px;height:18px;background:#d8d8d8"></div><div style="position:absolute;left:1358px;top:533px;width:1px;height:18px;background:#d8d8d8"></div><div style="position:absolute;left:1467px;top:533px;width:1px;height:18px;background:#d8d8d8"></div><div style="position:absolute;left:1607px;top:533px;width:1px;height:18px;background:#d8d8d8"></div><div style="position:absolute;left:1881px;top:533px;width:1px;height:18px;background:#d8d8d8"></div><div style="position:absolute;top:537px;font-size:11px;line-height:1;white-space:nowrap;color:#111;font-weight:bold;right:1401px;text-align:right;">12</div><div style="position:absolute;top:537px;font-size:11px;line-height:1;white-space:nowrap;color:#111;font-weight:bold;left:553px;">09.04.2018 11:23:33</div><div style="position:absolute;top:537px;font-size:11px;line-height:1;white-space:nowrap;color:#111;font-weight:bold;left:693px;">09.04.2018 11:13:07</div><div style="position:absolute;top:537px;font-size:11px;line-height:1;white-space:nowrap;color:#111;font-weight:bold;right:982px;text-align:right;">2</div><div style="position:absolute;top:537px;font-size:11px;line-height:1;white-space:nowrap;color:#111;font-weight:bold;left:942px;">LOC\user1403</div><div style="position:absolute;top:537px;font-size:11px;line-height:1;white-space:nowrap;color:#111;font-weight:bold;left:1082px;">user1403</div><div style="position:absolute;top:537px;font-size:11px;line-height:1;white-space:nowrap;color:#111;font-weight:bold;left:1221px;">KVS24</div><div style="position:absolute;top:537px;font-size:11px;line-height:1;white-space:nowrap;color:#111;font-weight:bold;left:1361px;">192.168.171.51</div><svg style="position:absolute;left:1470px;top:534px;" width="18" height="17" viewBox="0 0 18 17"><circle cx="8.4" cy="7.5" r="6.6" fill="none" stroke="#707070" stroke-width="1.3"/><path d="M6.4 1.2 V13.8 M10.4 1.2 V13.8 M2 5 H14.8 M2 9.2 H14.8" stroke="#707070" stroke-width="1.2"/><path d="M9.5 16 V10.5 Q9.5 7.5 12 6.5 H17 V16 Z" fill="#fff"/><ellipse cx="13.7" cy="9.3" rx="2.4" ry="2.2" fill="#2f6fc0"/><path d="M10.2 15.8 Q10.2 12 13.4 12 Q16.6 12 16.6 15.8 Z" fill="#2f6fc0"/></svg><div style="position:absolute;top:537px;font-size:11px;line-height:1;white-space:nowrap;color:#111;font-weight:bold;left:1491px;">Сетевой</div><svg style="position:absolute;left:1610px;top:534px;" width="18" height="17" viewBox="0 0 18 17"><path d="M4.75 12.3 H1.4 V0.6 H9.3 L12.7 3.6" fill="none" stroke="#555555" stroke-width="1.25"/><path d="M8.6 0.6 V4.2" fill="none" stroke="#555555" stroke-width="1.25"/><ellipse cx="11.5" cy="7.8" rx="2.5" ry="2.7" fill="#2e9a6a"/><path d="M5.9 15.8 Q5.9 10.9 11.4 10.9 Q16.9 10.9 16.9 15.8 Z" fill="#2e9a6a"/></svg><div style="position:absolute;top:537px;font-size:11px;line-height:1;white-space:nowrap;color:#111;font-weight:bold;left:1631px;">Вход с учетной записью выполнен успешно</div><svg style="position:absolute;left:1890px;top:537px;" width="10" height="10" viewBox="0 0 10 10"><circle cx="5" cy="5" r="3.3" fill="#86c440" stroke="#5f9c2c" stroke-width="0.7"/><circle cx="4.3" cy="4.2" r="1.1" fill="#c0e69a"/></svg><div style="position:absolute;left:493px;top:570px;width:1417px;height:1px;background:#d8d8d8"></div><div style="position:absolute;left:521px;top:552px;width:1px;height:18px;background:#d8d8d8"></div><div style="position:absolute;left:550px;top:552px;width:1px;height:18px;background:#d8d8d8"></div><div style="position:absolute;left:690px;top:552px;width:1px;height:18px;background:#d8d8d8"></div><div style="position:absolute;left:831px;top:552px;width:1px;height:18px;background:#d8d8d8"></div><div style="position:absolute;left:939px;top:552px;width:1px;height:18px;background:#d8d8d8"></div><div style="position:absolute;left:1079px;top:552px;width:1px;height:18px;background:#d8d8d8"></div><div style="position:absolute;left:1218px;top:552px;width:1px;height:18px;background:#d8d8d8"></div><div style="position:absolute;left:1358px;top:552px;width:1px;height:18px;background:#d8d8d8"></div><div style="position:absolute;left:1467px;top:552px;width:1px;height:18px;background:#d8d8d8"></div><div style="position:absolute;left:1607px;top:552px;width:1px;height:18px;background:#d8d8d8"></div><div style="position:absolute;left:1881px;top:552px;width:1px;height:18px;background:#d8d8d8"></div><div style="position:absolute;top:556px;font-size:11px;line-height:1;white-space:nowrap;color:#111;font-weight:bold;right:1401px;text-align:right;">13</div><div style="position:absolute;top:556px;font-size:11px;line-height:1;white-space:nowrap;color:#111;font-weight:bold;left:553px;">09.04.2018 13:16:39</div><div style="position:absolute;top:556px;font-size:11px;line-height:1;white-space:nowrap;color:#111;font-weight:bold;left:693px;">09.04.2018 13:06:07</div><div style="position:absolute;top:556px;font-size:11px;line-height:1;white-space:nowrap;color:#111;font-weight:bold;right:982px;text-align:right;">2</div><div style="position:absolute;top:556px;font-size:11px;line-height:1;white-space:nowrap;color:#111;font-weight:bold;left:942px;">LOC\user1403</div><div style="position:absolute;top:556px;font-size:11px;line-height:1;white-space:nowrap;color:#111;font-weight:bold;left:1082px;">user1403</div><div style="position:absolute;top:556px;font-size:11px;line-height:1;white-space:nowrap;color:#111;font-weight:bold;left:1221px;">KVS24</div><div style="position:absolute;top:556px;font-size:11px;line-height:1;white-space:nowrap;color:#111;font-weight:bold;left:1361px;">192.168.171.51</div><svg style="position:absolute;left:1470px;top:553px;" width="18" height="17" viewBox="0 0 18 17"><circle cx="8.4" cy="7.5" r="6.6" fill="none" stroke="#707070" stroke-width="1.3"/><path d="M6.4 1.2 V13.8 M10.4 1.2 V13.8 M2 5 H14.8 M2 9.2 H14.8" stroke="#707070" stroke-width="1.2"/><path d="M9.5 16 V10.5 Q9.5 7.5 12 6.5 H17 V16 Z" fill="#fff"/><ellipse cx="13.7" cy="9.3" rx="2.4" ry="2.2" fill="#2f6fc0"/><path d="M10.2 15.8 Q10.2 12 13.4 12 Q16.6 12 16.6 15.8 Z" fill="#2f6fc0"/></svg><div style="position:absolute;top:556px;font-size:11px;line-height:1;white-space:nowrap;color:#111;font-weight:bold;left:1491px;">Сетевой</div><svg style="position:absolute;left:1610px;top:553px;" width="18" height="17" viewBox="0 0 18 17"><path d="M4.75 12.3 H1.4 V0.6 H9.3 L12.7 3.6" fill="none" stroke="#555555" stroke-width="1.25"/><path d="M8.6 0.6 V4.2" fill="none" stroke="#555555" stroke-width="1.25"/><ellipse cx="11.5" cy="7.8" rx="2.5" ry="2.7" fill="#2e9a6a"/><path d="M5.9 15.8 Q5.9 10.9 11.4 10.9 Q16.9 10.9 16.9 15.8 Z" fill="#2e9a6a"/></svg><div style="position:absolute;top:556px;font-size:11px;line-height:1;white-space:nowrap;color:#111;font-weight:bold;left:1631px;">Вход с учетной записью выполнен успешно</div><svg style="position:absolute;left:1890px;top:556px;" width="10" height="10" viewBox="0 0 10 10"><circle cx="5" cy="5" r="3.3" fill="#86c440" stroke="#5f9c2c" stroke-width="0.7"/><circle cx="4.3" cy="4.2" r="1.1" fill="#c0e69a"/></svg><div style="position:absolute;left:493px;top:589px;width:1417px;height:1px;background:#d8d8d8"></div><div style="position:absolute;left:521px;top:571px;width:1px;height:18px;background:#d8d8d8"></div><div style="position:absolute;left:550px;top:571px;width:1px;height:18px;background:#d8d8d8"></div><div style="position:absolute;left:690px;top:571px;width:1px;height:18px;background:#d8d8d8"></div><div style="position:absolute;left:831px;top:571px;width:1px;height:18px;background:#d8d8d8"></div><div style="position:absolute;left:939px;top:571px;width:1px;height:18px;background:#d8d8d8"></div><div style="position:absolute;left:1079px;top:571px;width:1px;height:18px;background:#d8d8d8"></div><div style="position:absolute;left:1218px;top:571px;width:1px;height:18px;background:#d8d8d8"></div><div style="position:absolute;left:1358px;top:571px;width:1px;height:18px;background:#d8d8d8"></div><div style="position:absolute;left:1467px;top:571px;width:1px;height:18px;background:#d8d8d8"></div><div style="position:absolute;left:1607px;top:571px;width:1px;height:18px;background:#d8d8d8"></div><div style="position:absolute;left:1881px;top:571px;width:1px;height:18px;background:#d8d8d8"></div><div style="position:absolute;top:575px;font-size:11px;line-height:1;white-space:nowrap;color:#111;font-weight:bold;right:1401px;text-align:right;">14</div><div style="position:absolute;top:575px;font-size:11px;line-height:1;white-space:nowrap;color:#111;font-weight:bold;left:553px;">09.04.2018 14:15:57</div><div style="position:absolute;top:575px;font-size:11px;line-height:1;white-space:nowrap;color:#111;font-weight:bold;left:693px;">09.04.2018 14:05:39</div><div style="position:absolute;top:575px;font-size:11px;line-height:1;white-space:nowrap;color:#111;font-weight:bold;right:982px;text-align:right;">1</div><div style="position:absolute;top:575px;font-size:11px;line-height:1;white-space:nowrap;color:#111;font-weight:bold;left:942px;">LOC\user1403</div><div style="position:absolute;top:575px;font-size:11px;line-height:1;white-space:nowrap;color:#111;font-weight:bold;left:1082px;">user1403</div><div style="position:absolute;top:575px;font-size:11px;line-height:1;white-space:nowrap;color:#111;font-weight:bold;left:1221px;">KVS24</div><div style="position:absolute;top:575px;font-size:11px;line-height:1;white-space:nowrap;color:#111;font-weight:bold;left:1361px;">192.168.171.51</div><svg style="position:absolute;left:1470px;top:572px;" width="18" height="17" viewBox="0 0 18 17"><circle cx="8.4" cy="7.5" r="6.6" fill="none" stroke="#707070" stroke-width="1.3"/><path d="M6.4 1.2 V13.8 M10.4 1.2 V13.8 M2 5 H14.8 M2 9.2 H14.8" stroke="#707070" stroke-width="1.2"/><path d="M9.5 16 V10.5 Q9.5 7.5 12 6.5 H17 V16 Z" fill="#fff"/><ellipse cx="13.7" cy="9.3" rx="2.4" ry="2.2" fill="#2f6fc0"/><path d="M10.2 15.8 Q10.2 12 13.4 12 Q16.6 12 16.6 15.8 Z" fill="#2f6fc0"/></svg><div style="position:absolute;top:575px;font-size:11px;line-height:1;white-space:nowrap;color:#111;font-weight:bold;left:1491px;">Сетевой</div><svg style="position:absolute;left:1610px;top:572px;" width="18" height="17" viewBox="0 0 18 17"><path d="M4.75 12.3 H1.4 V0.6 H9.3 L12.7 3.6" fill="none" stroke="#555555" stroke-width="1.25"/><path d="M8.6 0.6 V4.2" fill="none" stroke="#555555" stroke-width="1.25"/><ellipse cx="11.5" cy="7.8" rx="2.5" ry="2.7" fill="#2e9a6a"/><path d="M5.9 15.8 Q5.9 10.9 11.4 10.9 Q16.9 10.9 16.9 15.8 Z" fill="#2e9a6a"/></svg><div style="position:absolute;top:575px;font-size:11px;line-height:1;white-space:nowrap;color:#111;font-weight:bold;left:1631px;">Вход с учетной записью выполнен успешно</div><svg style="position:absolute;left:1890px;top:575px;" width="10" height="10" viewBox="0 0 10 10"><circle cx="5" cy="5" r="3.3" fill="#86c440" stroke="#5f9c2c" stroke-width="0.7"/><circle cx="4.3" cy="4.2" r="1.1" fill="#c0e69a"/></svg><div style="position:absolute;left:493px;top:608px;width:1417px;height:1px;background:#d8d8d8"></div><div style="position:absolute;left:521px;top:590px;width:1px;height:18px;background:#d8d8d8"></div><div style="position:absolute;left:550px;top:590px;width:1px;height:18px;background:#d8d8d8"></div><div style="position:absolute;left:690px;top:590px;width:1px;height:18px;background:#d8d8d8"></div><div style="position:absolute;left:831px;top:590px;width:1px;height:18px;background:#d8d8d8"></div><div style="position:absolute;left:939px;top:590px;width:1px;height:18px;background:#d8d8d8"></div><div style="position:absolute;left:1079px;top:590px;width:1px;height:18px;background:#d8d8d8"></div><div style="position:absolute;left:1218px;top:590px;width:1px;height:18px;background:#d8d8d8"></div><div style="position:absolute;left:1358px;top:590px;width:1px;height:18px;background:#d8d8d8"></div><div style="position:absolute;left:1467px;top:590px;width:1px;height:18px;background:#d8d8d8"></div><div style="position:absolute;left:1607px;top:590px;width:1px;height:18px;background:#d8d8d8"></div><div style="position:absolute;left:1881px;top:590px;width:1px;height:18px;background:#d8d8d8"></div><div style="position:absolute;top:594px;font-size:11px;line-height:1;white-space:nowrap;color:#111;font-weight:bold;right:1401px;text-align:right;">15</div><div style="position:absolute;top:594px;font-size:11px;line-height:1;white-space:nowrap;color:#111;font-weight:bold;left:553px;">09.04.2018 14:58:40</div><div style="position:absolute;top:594px;font-size:11px;line-height:1;white-space:nowrap;color:#111;font-weight:bold;left:693px;">09.04.2018 14:48:07</div><div style="position:absolute;top:594px;font-size:11px;line-height:1;white-space:nowrap;color:#111;font-weight:bold;right:982px;text-align:right;">2</div><div style="position:absolute;top:594px;font-size:11px;line-height:1;white-space:nowrap;color:#111;font-weight:bold;left:942px;">LOC\user1403</div><div style="position:absolute;top:594px;font-size:11px;line-height:1;white-space:nowrap;color:#111;font-weight:bold;left:1082px;">user1403</div><div style="position:absolute;top:594px;font-size:11px;line-height:1;white-space:nowrap;color:#111;font-weight:bold;left:1221px;">KVS24</div><div style="position:absolute;top:594px;font-size:11px;line-height:1;white-space:nowrap;color:#111;font-weight:bold;left:1361px;">192.168.171.51</div><svg style="position:absolute;left:1470px;top:591px;" width="18" height="17" viewBox="0 0 18 17"><circle cx="8.4" cy="7.5" r="6.6" fill="none" stroke="#707070" stroke-width="1.3"/><path d="M6.4 1.2 V13.8 M10.4 1.2 V13.8 M2 5 H14.8 M2 9.2 H14.8" stroke="#707070" stroke-width="1.2"/><path d="M9.5 16 V10.5 Q9.5 7.5 12 6.5 H17 V16 Z" fill="#fff"/><ellipse cx="13.7" cy="9.3" rx="2.4" ry="2.2" fill="#2f6fc0"/><path d="M10.2 15.8 Q10.2 12 13.4 12 Q16.6 12 16.6 15.8 Z" fill="#2f6fc0"/></svg><div style="position:absolute;top:594px;font-size:11px;line-height:1;white-space:nowrap;color:#111;font-weight:bold;left:1491px;">Сетевой</div><svg style="position:absolute;left:1610px;top:591px;" width="18" height="17" viewBox="0 0 18 17"><path d="M4.75 12.3 H1.4 V0.6 H9.3 L12.7 3.6" fill="none" stroke="#555555" stroke-width="1.25"/><path d="M8.6 0.6 V4.2" fill="none" stroke="#555555" stroke-width="1.25"/><ellipse cx="11.5" cy="7.8" rx="2.5" ry="2.7" fill="#2e9a6a"/><path d="M5.9 15.8 Q5.9 10.9 11.4 10.9 Q16.9 10.9 16.9 15.8 Z" fill="#2e9a6a"/></svg><div style="position:absolute;top:594px;font-size:11px;line-height:1;white-space:nowrap;color:#111;font-weight:bold;left:1631px;">Вход с учетной записью выполнен успешно</div><svg style="position:absolute;left:1890px;top:594px;" width="10" height="10" viewBox="0 0 10 10"><circle cx="5" cy="5" r="3.3" fill="#86c440" stroke="#5f9c2c" stroke-width="0.7"/><circle cx="4.3" cy="4.2" r="1.1" fill="#c0e69a"/></svg><div style="position:absolute;left:493px;top:627px;width:1417px;height:1px;background:#d8d8d8"></div><div style="position:absolute;left:521px;top:609px;width:1px;height:18px;background:#d8d8d8"></div><div style="position:absolute;left:550px;top:609px;width:1px;height:18px;background:#d8d8d8"></div><div style="position:absolute;left:690px;top:609px;width:1px;height:18px;background:#d8d8d8"></div><div style="position:absolute;left:831px;top:609px;width:1px;height:18px;background:#d8d8d8"></div><div style="position:absolute;left:939px;top:609px;width:1px;height:18px;background:#d8d8d8"></div><div style="position:absolute;left:1079px;top:609px;width:1px;height:18px;background:#d8d8d8"></div><div style="position:absolute;left:1218px;top:609px;width:1px;height:18px;background:#d8d8d8"></div><div style="position:absolute;left:1358px;top:609px;width:1px;height:18px;background:#d8d8d8"></div><div style="position:absolute;left:1467px;top:609px;width:1px;height:18px;background:#d8d8d8"></div><div style="position:absolute;left:1607px;top:609px;width:1px;height:18px;background:#d8d8d8"></div><div style="position:absolute;left:1881px;top:609px;width:1px;height:18px;background:#d8d8d8"></div><div style="position:absolute;top:613px;font-size:11px;line-height:1;white-space:nowrap;color:#111;font-weight:bold;right:1401px;text-align:right;">16</div><div style="position:absolute;top:613px;font-size:11px;line-height:1;white-space:nowrap;color:#111;font-weight:bold;left:553px;">09.04.2018 16:45:15</div><div style="position:absolute;top:613px;font-size:11px;line-height:1;white-space:nowrap;color:#111;font-weight:bold;left:693px;">09.04.2018 16:35:07</div><div style="position:absolute;top:613px;font-size:11px;line-height:1;white-space:nowrap;color:#111;font-weight:bold;right:982px;text-align:right;">2</div><div style="position:absolute;top:613px;font-size:11px;line-height:1;white-space:nowrap;color:#111;font-weight:bold;left:942px;">LOC\user1403</div><div style="position:absolute;top:613px;font-size:11px;line-height:1;white-space:nowrap;color:#111;font-weight:bold;left:1082px;">user1403</div><div style="position:absolute;top:613px;font-size:11px;line-height:1;white-space:nowrap;color:#111;font-weight:bold;left:1221px;">KVS24</div><div style="position:absolute;top:613px;font-size:11px;line-height:1;white-space:nowrap;color:#111;font-weight:bold;left:1361px;">192.168.171.51</div><svg style="position:absolute;left:1470px;top:610px;" width="18" height="17" viewBox="0 0 18 17"><circle cx="8.4" cy="7.5" r="6.6" fill="none" stroke="#707070" stroke-width="1.3"/><path d="M6.4 1.2 V13.8 M10.4 1.2 V13.8 M2 5 H14.8 M2 9.2 H14.8" stroke="#707070" stroke-width="1.2"/><path d="M9.5 16 V10.5 Q9.5 7.5 12 6.5 H17 V16 Z" fill="#fff"/><ellipse cx="13.7" cy="9.3" rx="2.4" ry="2.2" fill="#2f6fc0"/><path d="M10.2 15.8 Q10.2 12 13.4 12 Q16.6 12 16.6 15.8 Z" fill="#2f6fc0"/></svg><div style="position:absolute;top:613px;font-size:11px;line-height:1;white-space:nowrap;color:#111;font-weight:bold;left:1491px;">Сетевой</div><svg style="position:absolute;left:1610px;top:610px;" width="18" height="17" viewBox="0 0 18 17"><path d="M4.75 12.3 H1.4 V0.6 H9.3 L12.7 3.6" fill="none" stroke="#555555" stroke-width="1.25"/><path d="M8.6 0.6 V4.2" fill="none" stroke="#555555" stroke-width="1.25"/><ellipse cx="11.5" cy="7.8" rx="2.5" ry="2.7" fill="#2e9a6a"/><path d="M5.9 15.8 Q5.9 10.9 11.4 10.9 Q16.9 10.9 16.9 15.8 Z" fill="#2e9a6a"/></svg><div style="position:absolute;top:613px;font-size:11px;line-height:1;white-space:nowrap;color:#111;font-weight:bold;left:1631px;">Вход с учетной записью выполнен успешно</div><svg style="position:absolute;left:1890px;top:613px;" width="10" height="10" viewBox="0 0 10 10"><circle cx="5" cy="5" r="3.3" fill="#86c440" stroke="#5f9c2c" stroke-width="0.7"/><circle cx="4.3" cy="4.2" r="1.1" fill="#c0e69a"/></svg><div style="position:absolute;left:493px;top:646px;width:1417px;height:1px;background:#d8d8d8"></div><div style="position:absolute;left:521px;top:628px;width:1px;height:18px;background:#d8d8d8"></div><div style="position:absolute;left:550px;top:628px;width:1px;height:18px;background:#d8d8d8"></div><div style="position:absolute;left:690px;top:628px;width:1px;height:18px;background:#d8d8d8"></div><div style="position:absolute;left:831px;top:628px;width:1px;height:18px;background:#d8d8d8"></div><div style="position:absolute;left:939px;top:628px;width:1px;height:18px;background:#d8d8d8"></div><div style="position:absolute;left:1079px;top:628px;width:1px;height:18px;background:#d8d8d8"></div><div style="position:absolute;left:1218px;top:628px;width:1px;height:18px;background:#d8d8d8"></div><div style="position:absolute;left:1358px;top:628px;width:1px;height:18px;background:#d8d8d8"></div><div style="position:absolute;left:1467px;top:628px;width:1px;height:18px;background:#d8d8d8"></div><div style="position:absolute;left:1607px;top:628px;width:1px;height:18px;background:#d8d8d8"></div><div style="position:absolute;left:1881px;top:628px;width:1px;height:18px;background:#d8d8d8"></div><div style="position:absolute;top:632px;font-size:11px;line-height:1;white-space:nowrap;color:#111;font-weight:bold;right:1401px;text-align:right;">17</div><div style="position:absolute;top:632px;font-size:11px;line-height:1;white-space:nowrap;color:#111;font-weight:bold;left:553px;">09.04.2018 18:23:37</div><div style="position:absolute;top:632px;font-size:11px;line-height:1;white-space:nowrap;color:#111;font-weight:bold;left:693px;">09.04.2018 18:13:07</div><div style="position:absolute;top:632px;font-size:11px;line-height:1;white-space:nowrap;color:#111;font-weight:bold;right:982px;text-align:right;">2</div><div style="position:absolute;top:632px;font-size:11px;line-height:1;white-space:nowrap;color:#111;font-weight:bold;left:942px;">LOC\user1403</div><div style="position:absolute;top:632px;font-size:11px;line-height:1;white-space:nowrap;color:#111;font-weight:bold;left:1082px;">user1403</div><div style="position:absolute;top:632px;font-size:11px;line-height:1;white-space:nowrap;color:#111;font-weight:bold;left:1221px;">KVS24</div><div style="position:absolute;top:632px;font-size:11px;line-height:1;white-space:nowrap;color:#111;font-weight:bold;left:1361px;">192.168.171.51</div><svg style="position:absolute;left:1470px;top:629px;" width="18" height="17" viewBox="0 0 18 17"><circle cx="8.4" cy="7.5" r="6.6" fill="none" stroke="#707070" stroke-width="1.3"/><path d="M6.4 1.2 V13.8 M10.4 1.2 V13.8 M2 5 H14.8 M2 9.2 H14.8" stroke="#707070" stroke-width="1.2"/><path d="M9.5 16 V10.5 Q9.5 7.5 12 6.5 H17 V16 Z" fill="#fff"/><ellipse cx="13.7" cy="9.3" rx="2.4" ry="2.2" fill="#2f6fc0"/><path d="M10.2 15.8 Q10.2 12 13.4 12 Q16.6 12 16.6 15.8 Z" fill="#2f6fc0"/></svg><div style="position:absolute;top:632px;font-size:11px;line-height:1;white-space:nowrap;color:#111;font-weight:bold;left:1491px;">Сетевой</div><svg style="position:absolute;left:1610px;top:629px;" width="18" height="17" viewBox="0 0 18 17"><path d="M4.75 12.3 H1.4 V0.6 H9.3 L12.7 3.6" fill="none" stroke="#555555" stroke-width="1.25"/><path d="M8.6 0.6 V4.2" fill="none" stroke="#555555" stroke-width="1.25"/><ellipse cx="11.5" cy="7.8" rx="2.5" ry="2.7" fill="#2e9a6a"/><path d="M5.9 15.8 Q5.9 10.9 11.4 10.9 Q16.9 10.9 16.9 15.8 Z" fill="#2e9a6a"/></svg><div style="position:absolute;top:632px;font-size:11px;line-height:1;white-space:nowrap;color:#111;font-weight:bold;left:1631px;">Вход с учетной записью выполнен успешно</div><svg style="position:absolute;left:1890px;top:632px;" width="10" height="10" viewBox="0 0 10 10"><circle cx="5" cy="5" r="3.3" fill="#86c440" stroke="#5f9c2c" stroke-width="0.7"/><circle cx="4.3" cy="4.2" r="1.1" fill="#c0e69a"/></svg><div style="position:absolute;left:493px;top:324px;width:1417px;height:19px;border:1px dotted #222"></div><div style="position:absolute;left:493px;top:765px;width:1417px;height:1px;background:#9a9a9a"></div><div style="position:absolute;left:493px;top:766px;width:1417px;height:1px;background:#dedede"></div><svg style="position:absolute;left:1110px;top:773px;" width="16" height="16" viewBox="0 0 16 16"><circle cx="8" cy="8" r="7.2" fill="none" stroke="#b4b4b4" stroke-width="1.4"/><path d="M12 8 H6.5 M9 4.5 L5.5 8 L9 11.5" stroke="#b4b4b4" stroke-width="1.8" fill="none"/><path d="M4.5 4.5 V11.5" stroke="#b4b4b4" stroke-width="1.8"/></svg><svg style="position:absolute;left:1133px;top:773px;" width="16" height="16" viewBox="0 0 16 16"><circle cx="8" cy="8" r="7.2" fill="none" stroke="#b4b4b4" stroke-width="1.4"/><path d="M12 8 H5 M8 4.5 L4.5 8 L8 11.5" stroke="#b4b4b4" stroke-width="1.8" fill="none"/></svg><svg style="position:absolute;left:1253px;top:773px;" width="16" height="16" viewBox="0 0 16 16"><circle cx="8" cy="8" r="7.2" fill="none" stroke="#b4b4b4" stroke-width="1.4"/><path d="M4 8 H11 M8 4.5 L11.5 8 L8 11.5" stroke="#b4b4b4" stroke-width="1.8" fill="none"/></svg><svg style="position:absolute;left:1276px;top:773px;" width="16" height="16" viewBox="0 0 16 16"><circle cx="8" cy="8" r="7.2" fill="none" stroke="#b4b4b4" stroke-width="1.4"/><path d="M4 8 H9.5 M7 4.5 L10.5 8 L7 11.5" stroke="#b4b4b4" stroke-width="1.8" fill="none"/><path d="M11.5 4.5 V11.5" stroke="#b4b4b4" stroke-width="1.8"/></svg><div style="position:absolute;top:776px;font-size:11.5px;line-height:1;white-space:nowrap;color:#333;font-weight:normal;left:1187px;">1 / 1</div><div style="position:absolute;left:493px;top:795px;width:1417px;height:1px;background:#9a9a9a"></div><div style="position:absolute;left:1192px;top:801px;width:2px;height:2px;background:#555"></div><div style="position:absolute;left:1196px;top:801px;width:2px;height:2px;background:#555"></div><div style="position:absolute;left:1200px;top:801px;width:2px;height:2px;background:#555"></div><div style="position:absolute;left:1204px;top:801px;width:2px;height:2px;background:#555"></div><div style="position:absolute;left:1208px;top:801px;width:2px;height:2px;background:#555"></div><div style="position:absolute;left:496px;top:811px;width:1411px;height:30px;background:#f5f5f5"></div><div style="position:absolute;left:496px;top:841px;width:1411px;height:1px;background:#bdbdbd"></div><svg style="position:absolute;left:500px;top:814px;" width="24" height="24" viewBox="0 0 24 24"><rect x="1.5" y="1.5" width="18" height="13" rx="1" fill="#fff" stroke="#3c7bc0" stroke-width="2"/><path d="M8 17 H14 M5 19 H17" stroke="#3c7bc0" stroke-width="1.6"/><circle cx="8" cy="9" r="1.3" fill="#5a8fcf"/><circle cx="12" cy="6" r="1.3" fill="#5a8fcf"/><circle cx="14" cy="4.5" r="0.9" fill="#5a8fcf"/><rect x="15" y="17" width="2" height="6" fill="#8a8a8a"/><rect x="18" y="15" width="2" height="8" fill="#8a8a8a"/><rect x="21" y="18" width="2" height="5" fill="#8a8a8a"/></svg><div style="position:absolute;top:820px;font-size:11.6px;line-height:1;white-space:nowrap;color:#2e6fba;font-weight:normal;left:530px;">Статистика входов в систему</div><div style="position:absolute;top:852px;font-size:10.9px;line-height:1;white-space:nowrap;color:#444;font-weight:normal;left:498px;">Период сбора событий</div><div style="position:absolute;top:852px;font-size:12px;line-height:1;white-space:nowrap;color:#222;font-weight:bold;left:620px;">09.04.2018 0:05:39</div><div style="position:absolute;left:738px;top:856px;width:3px;height:1px;background:#333"></div><div style="position:absolute;top:852px;font-size:12px;line-height:1;white-space:nowrap;color:#222;font-weight:bold;left:746px;">09.04.2018 0:05:39</div><div style="position:absolute;top:874px;font-size:10.9px;line-height:1;white-space:nowrap;color:#444;font-weight:normal;left:498px;">Пользователь</div><div style="position:absolute;top:874px;font-size:12px;line-height:1;white-space:nowrap;color:#222;font-weight:bold;left:620px;">LOC\user1403</div><div style="position:absolute;top:896px;font-size:11.2px;line-height:1;white-space:nowrap;color:#444;font-weight:normal;left:498px;">Количество входов</div><div style="position:absolute;top:896px;font-size:12px;line-height:1;white-space:nowrap;color:#222;font-weight:bold;left:621px;">1</div><div style="position:absolute;left:499px;top:917px;width:1405px;height:1px;background:#d4d4d4"></div><svg style="position:absolute;left:503px;top:929px;" width="57" height="56" viewBox="0 0 57 56"><path d="M36.7 17 V6 Q36.7 3.8 34.5 3.8 H5.5 Q3.3 3.8 3.3 6 V50.3 Q3.3 52.5 5.5 52.5 H34.5 Q36.7 52.5 36.7 50.3 V39" stroke="#3c7bc0" stroke-width="4.6" fill="none"/><path d="M55 27.6 H26" stroke="#3c7bc0" stroke-width="4.6"/><path d="M17.5 27.6 L28.5 19.5 V35.7 Z" fill="#3c7bc0"/></svg><div style="position:absolute;top:930px;font-size:11.7px;line-height:1;white-space:nowrap;color:#555;font-weight:normal;left:587px;">Аутентификация</div><div style="position:absolute;top:951px;font-size:11.5px;line-height:1;white-space:nowrap;color:#555;font-weight:normal;left:587px;">Аудит входа в систему</div><div style="position:absolute;top:972px;font-size:11.7px;line-height:1;white-space:nowrap;color:#555;font-weight:normal;left:587px;">Состояние</div><div style="position:absolute;top:929px;font-size:11.6px;line-height:1;white-space:nowrap;color:#333;font-weight:bold;left:734px;">Kerberos</div><svg style="position:absolute;left:734px;top:947px;" width="18" height="17" viewBox="0 0 18 17"><circle cx="8.4" cy="7.5" r="6.6" fill="none" stroke="#b0b0b0" stroke-width="1.3"/><path d="M6.4 1.2 V13.8 M10.4 1.2 V13.8 M2 5 H14.8 M2 9.2 H14.8" stroke="#b0b0b0" stroke-width="1.2"/><path d="M9.5 16 V10.5 Q9.5 7.5 12 6.5 H17 V16 Z" fill="#fff"/><ellipse cx="13.7" cy="9.3" rx="2.4" ry="2.2" fill="#b8b8b8"/><path d="M10.2 15.8 Q10.2 12 13.4 12 Q16.6 12 16.6 15.8 Z" fill="#b8b8b8"/></svg><div style="position:absolute;top:951px;font-size:11.7px;line-height:1;white-space:nowrap;color:#111;font-weight:bold;left:755px;">Сетевой</div><svg style="position:absolute;left:734px;top:968px;" width="18" height="17" viewBox="0 0 18 17"><path d="M4.75 12.3 H1.4 V0.6 H9.3 L12.7 3.6" fill="none" stroke="#b0b0b0" stroke-width="1.25"/><path d="M8.6 0.6 V4.2" fill="none" stroke="#b0b0b0" stroke-width="1.25"/><ellipse cx="11.5" cy="7.8" rx="2.5" ry="2.7" fill="#bdbdbd"/><path d="M5.9 15.8 Q5.9 10.9 11.4 10.9 Q16.9 10.9 16.9 15.8 Z" fill="#bdbdbd"/></svg><div style="position:absolute;top:971px;font-size:11.65px;line-height:1;white-space:nowrap;color:#111;font-weight:bold;left:755px;">Вход с учетной записью выполнен успешно</div><div style="position:absolute;left:0px;top:1010px;width:1919px;height:25px;background:#0a72c6"></div><div style="position:absolute;top:1018px;font-size:11.2px;line-height:1;white-space:nowrap;color:#fff;font-weight:normal;left:1px;">Статистика входов в систему</div><div style="position:absolute;left:302px;top:1012px;width:1px;height:23px;background:#e8f0f8"></div><svg style="position:absolute;left:305px;top:1015px;" width="17" height="14" viewBox="0 0 17 14"><path d="M1 4 H4 M1 7 H4 M1 10 H4" stroke="#fff" stroke-width="1.2"/><rect x="5" y="2" width="11" height="9" rx="1" fill="none" stroke="#fff" stroke-width="1.4"/><rect x="7" y="4.5" width="7" height="4" fill="none" stroke="#fff" stroke-width="1"/><path d="M6 12.5 H15" stroke="#fff" stroke-width="1.2"/></svg><div style="position:absolute;top:1018px;font-size:11.2px;line-height:1;white-space:nowrap;color:#fff;font-weight:normal;left:324px;">Выполняется</div><div style="position:absolute;left:681px;top:1012px;width:1px;height:22px;background:#e8f0f8"></div><div style="position:absolute;top:1018px;font-size:11.2px;line-height:1;white-space:nowrap;color:#fff;font-weight:normal;left:684px;">Всего записей: 17</div><div style="position:absolute;left:1614px;top:1012px;width:1px;height:22px;background:#e8f0f8"></div><div style="position:absolute;left:1618px;top:1012px;width:22px;height:20px;background:#c2daf0"></div><div style="position:absolute;left:1622px;top:1016px;width:13px;height:12px;background:#fff;border:2px solid #0a3d6e;border-left-width:3px"></div><svg style="position:absolute;left:1644px;top:1015px;" width="15" height="16" viewBox="0 0 15 16"><path d="M1 2 H6.5 Q7.5 2 7.5 3 Q7.5 2 8.5 2 H14 V13 H8.5 Q7.5 13 7.5 14 Q7.5 13 6.5 13 H1 Z" fill="none" stroke="#fff" stroke-width="1.2"/><path d="M3 5 H6 M3 7 H6 M3 9 H6 M9 5 H12 M9 7 H12 M9 9 H12" stroke="#fff" stroke-width="0.9"/><path d="M7.5 13 V15.5" stroke="#fff" stroke-width="1"/></svg><div style="position:absolute;left:1665px;top:1012px;width:1px;height:22px;background:#e8f0f8"></div><div style="position:absolute;left:1681px;top:1019px;width:7px;height:1px;background:#fff"></div><div style="position:absolute;left:1700px;top:1019px;width:153px;height:1px;background:#fff"></div><div style="position:absolute;left:1775px;top:1015px;width:3px;height:9px;background:#fff"></div><div style="position:absolute;left:1776px;top:1028px;width:1px;height:4px;background:#0a2a4a"></div><div style="position:absolute;left:1865px;top:1019px;width:8px;height:1px;background:#fff"></div><div style="position:absolute;left:1868px;top:1016px;width:1px;height:7px;background:#fff"></div><div style="position:absolute;top:1018px;font-size:11.2px;line-height:1;white-space:nowrap;color:#fff;font-weight:normal;left:1889px;">100%</div></body></html>
